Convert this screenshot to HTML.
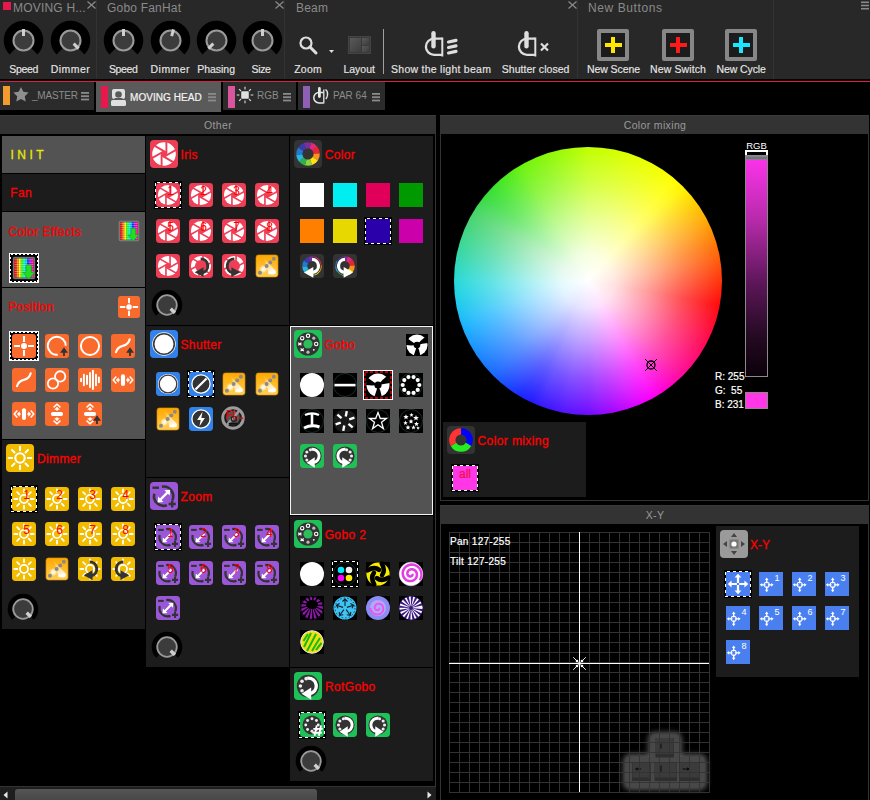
<!DOCTYPE html><html><head><meta charset="utf-8"><style>
*{margin:0;padding:0;box-sizing:border-box}
html,body{width:870px;height:800px;overflow:hidden;background:#000;font-family:"Liberation Sans", sans-serif}
div{position:absolute}
.t{white-space:nowrap;line-height:1}
svg{position:absolute;display:block;overflow:visible}
</style></head><body>
<svg width="0" height="0" style="position:absolute"><defs><symbol id="iris" viewBox="0 0 28 28"><rect width="28" height="28" rx="4" fill="#ee3f57"/><circle cx="14" cy="14" r="11.8" fill="#fff"/><path d="M16.40 15.40L16.40 1.00" stroke="#ee3f57" stroke-width="1.9"/><path d="M13.99 16.78L26.46 9.58" stroke="#ee3f57" stroke-width="1.9"/><path d="M11.59 15.38L24.06 22.58" stroke="#ee3f57" stroke-width="1.9"/><path d="M11.60 12.60L11.60 27.00" stroke="#ee3f57" stroke-width="1.9"/><path d="M14.01 11.22L1.54 18.42" stroke="#ee3f57" stroke-width="1.9"/><path d="M16.41 12.62L3.94 5.42" stroke="#ee3f57" stroke-width="1.9"/><circle cx="14" cy="14" r="2.9" fill="#ee3f57"/></symbol><symbol id="irisL" viewBox="0 0 28 28"><rect width="28" height="28" rx="4" fill="#ee3f57"/><circle cx="14" cy="14" r="11.8" fill="#fff"/><path d="M16.40 15.40L16.40 1.00" stroke="#ee3f57" stroke-width="1.9"/><path d="M13.99 16.78L26.46 9.58" stroke="#ee3f57" stroke-width="1.9"/><path d="M11.59 15.38L24.06 22.58" stroke="#ee3f57" stroke-width="1.9"/><path d="M11.60 12.60L11.60 27.00" stroke="#ee3f57" stroke-width="1.9"/><path d="M14.01 11.22L1.54 18.42" stroke="#ee3f57" stroke-width="1.9"/><path d="M16.41 12.62L3.94 5.42" stroke="#ee3f57" stroke-width="1.9"/><circle cx="14" cy="14" r="2.9" fill="#ee3f57"/><circle cx="14" cy="14" r="7" fill="#ee3f57"/><path d="M13.6 5.7A8.3 8.3 0 0 1 15.4 22.1" fill="none" stroke="#333" stroke-width="3.4"/><path d="M17 15.6L6.6 21.4L17 26.8Z" fill="#333"/></symbol><symbol id="irisR" viewBox="0 0 28 28"><rect width="28" height="28" rx="4" fill="#ee3f57"/><circle cx="14" cy="14" r="11.8" fill="#fff"/><path d="M16.40 15.40L16.40 1.00" stroke="#ee3f57" stroke-width="1.9"/><path d="M13.99 16.78L26.46 9.58" stroke="#ee3f57" stroke-width="1.9"/><path d="M11.59 15.38L24.06 22.58" stroke="#ee3f57" stroke-width="1.9"/><path d="M11.60 12.60L11.60 27.00" stroke="#ee3f57" stroke-width="1.9"/><path d="M14.01 11.22L1.54 18.42" stroke="#ee3f57" stroke-width="1.9"/><path d="M16.41 12.62L3.94 5.42" stroke="#ee3f57" stroke-width="1.9"/><circle cx="14" cy="14" r="2.9" fill="#ee3f57"/><circle cx="14" cy="14" r="7" fill="#ee3f57"/><path d="M14.4 5.7A8.3 8.3 0 0 0 12.6 22.1" fill="none" stroke="#333" stroke-width="3.4"/><path d="M11 15.6L21.4 21.4L11 26.8Z" fill="#333"/></symbol><symbol id="sun" viewBox="0 0 28 28"><rect width="28" height="28" rx="4" fill="#f2bc00"/><circle cx="14" cy="14" r="4.7" fill="none" stroke="#fff" stroke-width="2.1"/><path d="M21.80 14.00L25.30 14.00" stroke="#fff" stroke-width="2.1" stroke-linecap="round"/><path d="M19.52 19.52L21.99 21.99" stroke="#fff" stroke-width="2.1" stroke-linecap="round"/><path d="M14.00 21.80L14.00 25.30" stroke="#fff" stroke-width="2.1" stroke-linecap="round"/><path d="M8.48 19.52L6.01 21.99" stroke="#fff" stroke-width="2.1" stroke-linecap="round"/><path d="M6.20 14.00L2.70 14.00" stroke="#fff" stroke-width="2.1" stroke-linecap="round"/><path d="M8.48 8.48L6.01 6.01" stroke="#fff" stroke-width="2.1" stroke-linecap="round"/><path d="M14.00 6.20L14.00 2.70" stroke="#fff" stroke-width="2.1" stroke-linecap="round"/><path d="M19.52 8.48L21.99 6.01" stroke="#fff" stroke-width="2.1" stroke-linecap="round"/></symbol><symbol id="sunL" viewBox="0 0 28 28"><rect width="28" height="28" rx="4" fill="#f2bc00"/><circle cx="14" cy="14" r="4.7" fill="none" stroke="#fff" stroke-width="2.1"/><path d="M21.80 14.00L25.30 14.00" stroke="#fff" stroke-width="2.1" stroke-linecap="round"/><path d="M19.52 19.52L21.99 21.99" stroke="#fff" stroke-width="2.1" stroke-linecap="round"/><path d="M14.00 21.80L14.00 25.30" stroke="#fff" stroke-width="2.1" stroke-linecap="round"/><path d="M8.48 19.52L6.01 21.99" stroke="#fff" stroke-width="2.1" stroke-linecap="round"/><path d="M6.20 14.00L2.70 14.00" stroke="#fff" stroke-width="2.1" stroke-linecap="round"/><path d="M8.48 8.48L6.01 6.01" stroke="#fff" stroke-width="2.1" stroke-linecap="round"/><path d="M14.00 6.20L14.00 2.70" stroke="#fff" stroke-width="2.1" stroke-linecap="round"/><path d="M19.52 8.48L21.99 6.01" stroke="#fff" stroke-width="2.1" stroke-linecap="round"/><path d="M13.6 5.7A8.3 8.3 0 0 1 15.4 22.1" fill="none" stroke="#333" stroke-width="3.4"/><path d="M17 15.6L6.6 21.4L17 26.8Z" fill="#333"/></symbol><symbol id="sunR" viewBox="0 0 28 28"><rect width="28" height="28" rx="4" fill="#f2bc00"/><circle cx="14" cy="14" r="4.7" fill="none" stroke="#fff" stroke-width="2.1"/><path d="M21.80 14.00L25.30 14.00" stroke="#fff" stroke-width="2.1" stroke-linecap="round"/><path d="M19.52 19.52L21.99 21.99" stroke="#fff" stroke-width="2.1" stroke-linecap="round"/><path d="M14.00 21.80L14.00 25.30" stroke="#fff" stroke-width="2.1" stroke-linecap="round"/><path d="M8.48 19.52L6.01 21.99" stroke="#fff" stroke-width="2.1" stroke-linecap="round"/><path d="M6.20 14.00L2.70 14.00" stroke="#fff" stroke-width="2.1" stroke-linecap="round"/><path d="M8.48 8.48L6.01 6.01" stroke="#fff" stroke-width="2.1" stroke-linecap="round"/><path d="M14.00 6.20L14.00 2.70" stroke="#fff" stroke-width="2.1" stroke-linecap="round"/><path d="M19.52 8.48L21.99 6.01" stroke="#fff" stroke-width="2.1" stroke-linecap="round"/><path d="M14.4 5.7A8.3 8.3 0 0 0 12.6 22.1" fill="none" stroke="#333" stroke-width="3.4"/><path d="M11 15.6L21.4 21.4L11 26.8Z" fill="#333"/></symbol><symbol id="fx" viewBox="0 0 28 28"><defs><linearGradient id="gfx" x1="0" y1="0" x2="0" y2="1"><stop offset="0" stop-color="#ffa800"/><stop offset="1" stop-color="#ffcf55"/></linearGradient>
<linearGradient id="gbeam" x1="0" y1="0" x2="0.6" y2="1"><stop offset="0" stop-color="#fff" stop-opacity="0.1"/><stop offset="1" stop-color="#fff" stop-opacity="0.95"/></linearGradient>
<radialGradient id="gglow"><stop offset="0" stop-color="#fff"/><stop offset="0.5" stop-color="#fff" stop-opacity="0.7"/><stop offset="1" stop-color="#fff8a0" stop-opacity="0"/></radialGradient></defs>
<rect x="1.2" y="1.2" width="25.6" height="25.6" rx="2.8" fill="url(#gfx)" stroke="#e89400" stroke-width="0.8"/>
<path d="M10.5 5L25 20.5L16 24Z" fill="url(#gbeam)"/>
<ellipse cx="20" cy="22" rx="4.5" ry="1.8" fill="#fff"/>
<circle cx="9.8" cy="17.6" r="5" fill="url(#gglow)"/>
<g fill="#8a8a8a"><circle cx="5.8" cy="21.8" r="2.3"/><circle cx="13.6" cy="14" r="2.3"/><circle cx="17.8" cy="9.8" r="2.3"/><circle cx="22" cy="5.6" r="2.3"/></g></symbol><symbol id="shOpen" viewBox="0 0 28 28"><rect width="28" height="28" rx="4" fill="#3282ea"/><circle cx="14" cy="14" r="11.8" fill="#fff"/><circle cx="14" cy="14" r="10.3" fill="none" stroke="#3a3a3a" stroke-width="1.6"/></symbol><symbol id="shClosed" viewBox="0 0 28 28"><rect width="28" height="28" rx="4" fill="#3282ea"/><circle cx="14" cy="14" r="10.6" fill="#333" stroke="#fff" stroke-width="1.5"/><path d="M7.5 20.5L20.5 7.5" stroke="#fff" stroke-width="2.6"/></symbol><symbol id="shStrobe" viewBox="0 0 28 28"><rect width="28" height="28" rx="4" fill="#3282ea"/><circle cx="14" cy="14" r="10.6" fill="#333" stroke="#fff" stroke-width="1.5"/><path d="M15.8 5.5L9.5 15.2H13.6L12.2 22.5L18.5 12.8H14.4Z" fill="#fff"/></symbol><symbol id="flash" viewBox="0 0 28 28"><circle cx="14" cy="14" r="12" fill="#1c1c1c" stroke="#9c9c9c" stroke-width="3.4"/><circle cx="14" cy="13.5" r="8" fill="#555"/><path d="M7 22L21 6" stroke="#9c9c9c" stroke-width="3"/><path d="M9 20.5H19" stroke="#111" stroke-width="2"/><circle cx="15" cy="15" r="3" fill="none" stroke="#222" stroke-width="1.4"/></symbol><symbol id="zoom" viewBox="0 0 28 28"><rect width="28" height="28" rx="4" fill="#9a58d8"/><path d="M11.93 4.75A9.6 9.6 0 0 1 22.3 18.26M16.88 23.22A9.6 9.6 0 0 1 4.33 11.72" fill="none" stroke="#333" stroke-width="2.6"/><path d="M2.4 5.7H9" stroke="#333" stroke-width="2.4"/><path d="M22.2 18.4V25.6M18.6 22H25.8" stroke="#333" stroke-width="2.4"/><path d="M9.5 18.5L18.3 9.7" stroke="#fff" stroke-width="2.4"/><path d="M7.6 20.4L8.1 14.6L13.4 19.9Z M20.2 7.8L14.4 8.3L19.7 13.6Z" fill="#fff"/></symbol><symbol id="zoomN" viewBox="0 0 28 28"><rect width="28" height="28" rx="4" fill="#9a58d8"/><path d="M11.93 4.75A9.6 9.6 0 0 1 22.3 18.26M16.88 23.22A9.6 9.6 0 0 1 4.33 11.72" fill="none" stroke="#333" stroke-width="2.6"/><path d="M2.4 5.7H9" stroke="#333" stroke-width="2.4"/><path d="M22.2 18.4V25.6M18.6 22H25.8" stroke="#333" stroke-width="2.4"/><path d="M9.5 18.5L18 10" stroke="#fff" stroke-width="2.4"/><path d="M7.6 20.4L8.1 14.6L13.4 19.9Z" fill="#fff"/></symbol><symbol id="gobo" viewBox="0 0 28 28"><rect width="28" height="28" rx="4" fill="#1ec057"/><circle cx="14" cy="14" r="11.6" fill="#333"/><circle cx="14" cy="14" r="4.6" fill="#2dbd5a"/><circle cx="14.00" cy="5.80" r="1.7" fill="none" stroke="#fff" stroke-width="1.1"/><circle cx="19.80" cy="8.20" r="1.6" fill="#bbb"/><circle cx="22.20" cy="14.00" r="1.7" fill="none" stroke="#fff" stroke-width="1.1"/><circle cx="19.80" cy="19.80" r="0.9" fill="#fff"/><circle cx="14.00" cy="22.20" r="1.6" fill="#bbb"/><path d="M6.60 18.60L9.80 21.00M6.60 21.00L9.80 18.60" stroke="#fff" stroke-width="1.2"/><path d="M4.20 12.80L7.40 15.20M4.20 15.20L7.40 12.80" stroke="#fff" stroke-width="1.2"/><circle cx="8.20" cy="8.20" r="1.7" fill="none" stroke="#fff" stroke-width="1.1"/></symbol><symbol id="rgHash" viewBox="0 0 28 28"><rect width="28" height="28" rx="4" fill="#1ec057"/><circle cx="14" cy="14" r="11" fill="#333"/><circle cx="14" cy="14" r="3.5" fill="#333"/><circle cx="14.00" cy="6.70" r="1.7" fill="#eee"/><circle cx="19.16" cy="8.84" r="1.7" fill="#eee"/><circle cx="21.30" cy="14.00" r="1.7" fill="#eee"/><circle cx="19.16" cy="19.16" r="1.7" fill="#eee"/><circle cx="14.00" cy="21.30" r="1.7" fill="#eee"/><circle cx="8.84" cy="19.16" r="1.7" fill="#eee"/><circle cx="6.70" cy="14.00" r="1.7" fill="#eee"/><circle cx="8.84" cy="8.84" r="1.7" fill="#eee"/><path d="M14 17H28V28H14Z" fill="#1ec057" opacity="0"/><g stroke="#fff" stroke-width="2.2" fill="none"><path d="M19.5 14.5L17 26.5M24.5 14.5L22 26.5M15.5 18.5H26.5M14.5 23H25.5"/></g></symbol><symbol id="rgL" viewBox="0 0 28 28"><rect width="28" height="28" rx="4" fill="#1ec057"/><circle cx="14" cy="14" r="11.2" fill="#333"/><circle cx="12.16" cy="21.37" r="1.8" fill="#eee"/><circle cx="8.01" cy="18.68" r="1.8" fill="#eee"/><circle cx="6.40" cy="14.00" r="1.8" fill="#eee"/><circle cx="8.01" cy="9.32" r="1.8" fill="#eee"/><circle cx="12.16" cy="6.63" r="1.8" fill="#eee"/><path d="M13.5 6.2A7.8 7.8 0 0 1 15.5 21.7" fill="none" stroke="#fff" stroke-width="3.4"/><path d="M17.2 15.6L7.6 21.8L17.2 27.8Z" fill="#fff"/></symbol><symbol id="rgR" viewBox="0 0 28 28"><rect width="28" height="28" rx="4" fill="#1ec057"/><circle cx="14" cy="14" r="11.2" fill="#333"/><circle cx="15.84" cy="6.63" r="1.8" fill="#eee"/><circle cx="19.99" cy="9.32" r="1.8" fill="#eee"/><circle cx="21.60" cy="14.00" r="1.8" fill="#eee"/><circle cx="19.99" cy="18.68" r="1.8" fill="#eee"/><circle cx="15.84" cy="21.37" r="1.8" fill="#eee"/><path d="M14.5 6.2A7.8 7.8 0 0 0 12.5 21.7" fill="none" stroke="#fff" stroke-width="3.4"/><path d="M10.8 15.6L20.4 21.8L10.8 27.8Z" fill="#fff"/></symbol><symbol id="p1" viewBox="0 0 28 28"><rect width="28" height="28" rx="3.5" fill="#f96a2d"/><circle cx="14" cy="14" r="3.5" fill="#fff"/><path d="M14 2.4V9.3M14 18.7V25.6M2.4 14H9.3M18.7 14H25.6" stroke="#fff" stroke-width="2.45"/></symbol><symbol id="p2" viewBox="0 0 28 28"><rect width="28" height="28" rx="3.5" fill="#f96a2d"/><path d="M24.2 13.7A10.5 10.5 0 1 0 14.8 24.2" fill="none" stroke="#fff" stroke-width="2.3"/><path d="M17.6 21.8L22.2 15.5L26.8 21.8H23.2V25.6H21.1V21.8Z" fill="#333"/></symbol><symbol id="p3" viewBox="0 0 28 28"><rect width="28" height="28" rx="3.5" fill="#f96a2d"/><circle cx="14" cy="14" r="10.6" fill="none" stroke="#fff" stroke-width="2.3"/></symbol><symbol id="p4" viewBox="0 0 28 28"><rect width="28" height="28" rx="3.5" fill="#f96a2d"/><path d="M5.8 21.3C7.2 15.8 10.8 14.4 13.8 13.8S20.6 11.5 21.8 6.2" fill="none" stroke="#fff" stroke-width="2.5" stroke-linecap="round"/><path d="M17.6 21.8L22.2 15.5L26.8 21.8H23.2V25.6H21.1V21.8Z" fill="#333"/></symbol><symbol id="p5" viewBox="0 0 28 28"><rect width="28" height="28" rx="3.5" fill="#f96a2d"/><path d="M5.8 21.3C7.2 15.8 10.8 14.4 13.8 13.8S20.6 11.5 21.8 6.2" fill="none" stroke="#fff" stroke-width="2.5" stroke-linecap="round"/></symbol><symbol id="p6" viewBox="0 0 28 28"><rect width="28" height="28" rx="3.5" fill="#f96a2d"/><circle cx="9.3" cy="18" r="6" fill="none" stroke="#fff" stroke-width="2.1"/><circle cx="17.7" cy="9.8" r="6" fill="none" stroke="#fff" stroke-width="2.1"/></symbol><symbol id="p7" viewBox="0 0 28 28"><rect width="28" height="28" rx="3.5" fill="#f96a2d"/><path d="M3.6 12.6V15.6" stroke="#fff" stroke-width="2.3" stroke-linecap="round"/><path d="M6.9 7.8V20" stroke="#fff" stroke-width="2.3" stroke-linecap="round"/><path d="M10.5 9.1V18.7" stroke="#fff" stroke-width="2.3" stroke-linecap="round"/><path d="M14 5.7V22.1" stroke="#fff" stroke-width="2.3" stroke-linecap="round"/><path d="M17.4 3.2V24.6" stroke="#fff" stroke-width="2.3" stroke-linecap="round"/><path d="M21 7.8V20" stroke="#fff" stroke-width="2.3" stroke-linecap="round"/><path d="M24.4 11.2V16.7" stroke="#fff" stroke-width="2.3" stroke-linecap="round"/></symbol><symbol id="p8" viewBox="0 0 28 28"><rect width="28" height="28" rx="3.5" fill="#f96a2d"/><rect x="11.6" y="7.2" width="4.8" height="13.8" rx="2.4" fill="#fff"/><path d="M6.2 10L2.6 14L6.2 18M21.8 10L25.4 14L21.8 18" fill="none" stroke="#fff" stroke-width="1.7"/><path d="M5.6 14L9 10.8V17.2Z M22.4 14L19 10.8V17.2Z" fill="#fff"/><path d="M8 14H10.2M17.8 14H20" stroke="#fff" stroke-width="1.6"/></symbol><symbol id="p9" viewBox="0 0 28 28"><rect width="28" height="28" rx="3.5" fill="#f96a2d"/><rect x="6.9" y="11.8" width="14.2" height="4.4" rx="2.2" fill="#fff"/><path d="M10 6.3L14 2.7L18 6.3M10 21.7L14 25.3L18 21.7" fill="none" stroke="#fff" stroke-width="1.7"/><path d="M14 5.6L17.2 9H10.8Z M14 22.4L17.2 19H10.8Z" fill="#fff"/><path d="M14 8V10.2M14 17.8V20" stroke="#fff" stroke-width="1.6"/></symbol><symbol id="p10" viewBox="0 0 28 28"><rect width="28" height="28" rx="3.5" fill="#f96a2d"/><rect x="6.9" y="11.8" width="14.2" height="4.4" rx="2.2" fill="#fff"/><path d="M10 6.3L14 2.7L18 6.3M10 21.7L14 25.3L18 21.7" fill="none" stroke="#fff" stroke-width="1.7"/><path d="M14 5.6L17.2 9H10.8Z M14 22.4L17.2 19H10.8Z" fill="#fff"/><path d="M14 8V10.2M14 17.8V20" stroke="#fff" stroke-width="1.6"/><path d="M17.6 21.8L22.2 15.5L26.8 21.8H23.2V25.6H21.1V21.8Z" fill="#333"/></symbol><symbol id="cfx" viewBox="0 0 28 28"><rect x="1.5" y="1.5" width="25" height="25" rx="1.5" fill="#666" stroke="#999" stroke-width="0.8"/><rect x="3.00" y="3" width="2.5" height="22" fill="#ff0000"/><rect x="5.45" y="3" width="2.5" height="22" fill="#ff7700"/><rect x="7.90" y="3" width="2.5" height="22" fill="#ffee00"/><rect x="10.35" y="3" width="2.5" height="22" fill="#33ff00"/><rect x="12.80" y="3" width="2.5" height="22" fill="#00ffaa"/><rect x="15.25" y="3" width="2.5" height="22" fill="#00ccff"/><rect x="17.70" y="3" width="2.5" height="22" fill="#0033ff"/><rect x="20.15" y="3" width="2.5" height="22" fill="#cc00ff"/><rect x="22.60" y="3" width="2.5" height="22" fill="#ff0099"/><rect x="2.70" y="3" width="0.6" height="22" fill="#000" opacity="0.25"/><rect x="5.15" y="3" width="0.6" height="22" fill="#000" opacity="0.25"/><rect x="7.60" y="3" width="0.6" height="22" fill="#000" opacity="0.25"/><rect x="10.05" y="3" width="0.6" height="22" fill="#000" opacity="0.25"/><rect x="12.50" y="3" width="0.6" height="22" fill="#000" opacity="0.25"/><rect x="14.95" y="3" width="0.6" height="22" fill="#000" opacity="0.25"/><rect x="17.40" y="3" width="0.6" height="22" fill="#000" opacity="0.25"/><rect x="19.85" y="3" width="0.6" height="22" fill="#000" opacity="0.25"/><rect x="22.30" y="3" width="0.6" height="22" fill="#000" opacity="0.25"/><rect x="24.75" y="3" width="0.6" height="22" fill="#000" opacity="0.25"/><rect x="3" y="4.00" width="22" height="0.9" fill="#fff" opacity="0.45"/><rect x="3" y="6.70" width="22" height="0.9" fill="#fff" opacity="0.45"/><rect x="3" y="9.40" width="22" height="0.9" fill="#fff" opacity="0.45"/><rect x="3" y="12.10" width="22" height="0.9" fill="#fff" opacity="0.45"/><rect x="3" y="14.80" width="22" height="0.9" fill="#fff" opacity="0.45"/><rect x="3" y="17.50" width="22" height="0.9" fill="#fff" opacity="0.45"/><rect x="3" y="20.20" width="22" height="0.9" fill="#fff" opacity="0.45"/><rect x="3" y="22.90" width="22" height="0.9" fill="#fff" opacity="0.45"/><path d="M16.5 10.5H22.5V19H26.5L19.5 27L12.5 19H16.5Z" fill="#22dd22" stroke="#119911" stroke-width="0.6"/></symbol><symbol id="xyMain" viewBox="0 0 28 28"><rect width="28" height="28" fill="#4a7ff0"/><g fill="#fff"><path d="M14 2L18 6.5H15.3V12.7H12.7V6.5H10Z"/><path d="M14 26L10 21.5H12.7V15.3H15.3V21.5H18Z"/><path d="M2 14L6.5 10V12.7H12.7V15.3H6.5V18Z"/><path d="M26 14L21.5 18V15.3H15.3V12.7H21.5V10Z"/></g></symbol><symbol id="xyN" viewBox="0 0 28 28"><rect width="28" height="28" fill="#4a7ff0"/><g transform="translate(0.5 -3)"><g fill="#fff"><path d="M8.5 9.5L10.6 12.2H9.3V16.1H7.7V12.2H6.4Z"/><path d="M8.5 26.5L6.4 23.8H7.7V19.9H9.3V23.8H10.6Z"/><path d="M0.5 18L3.2 15.9V17.2H7.1V18.8H3.2V20.1Z"/><path d="M16.5 18L13.8 20.1V18.8H9.9V17.2H13.8V15.9Z"/></g><circle cx="8.5" cy="18" r="3" fill="none" stroke="#fff" stroke-width="1.2"/></g></symbol><symbol id="cmix" viewBox="0 0 28 28"><rect width="28" height="28" rx="4" fill="#333"/><path d="M14.00 2.20A11.8 11.8 0 0 1 24.22 19.90L18.85 16.80A5.6 5.6 0 0 0 14.00 8.40Z" fill="#0000ff"/><path d="M24.22 19.90A11.8 11.8 0 0 1 3.78 19.90L9.15 16.80A5.6 5.6 0 0 0 18.85 16.80Z" fill="#22ee22"/><path d="M3.78 19.90A11.8 11.8 0 0 1 14.00 2.20L14.00 8.40A5.6 5.6 0 0 0 9.15 16.80Z" fill="#ff3333"/></symbol><symbol id="cwheel" viewBox="0 0 28 28"><rect width="28" height="28" rx="4" fill="#333"/><path d="M17.05 2.60A11.8 11.8 0 0 1 23.23 6.65L18.38 10.51A5.6 5.6 0 0 0 15.45 8.59Z" fill="#dd2a7b"/><path d="M23.17 6.57A11.8 11.8 0 0 1 25.79 13.49L19.59 13.76A5.6 5.6 0 0 0 18.35 10.48Z" fill="#ee2233"/><path d="M25.78 13.38A11.8 11.8 0 0 1 23.84 20.51L18.67 17.09A5.6 5.6 0 0 0 19.59 13.71Z" fill="#f7931e"/><path d="M23.90 20.43A11.8 11.8 0 0 1 18.13 25.05L15.96 19.25A5.6 5.6 0 0 0 18.70 17.05Z" fill="#fde21a"/><path d="M18.23 25.02A11.8 11.8 0 0 1 10.85 25.37L12.50 19.40A5.6 5.6 0 0 0 16.01 19.23Z" fill="#8fd43c"/><path d="M10.95 25.40A11.8 11.8 0 0 1 4.77 21.35L9.62 17.49A5.6 5.6 0 0 0 12.55 19.41Z" fill="#30b04a"/><path d="M4.83 21.43A11.8 11.8 0 0 1 2.21 14.51L8.41 14.24A5.6 5.6 0 0 0 9.65 17.52Z" fill="#2bb3e6"/><path d="M2.22 14.62A11.8 11.8 0 0 1 4.16 7.49L9.33 10.91A5.6 5.6 0 0 0 8.41 14.29Z" fill="#1f7ccf"/><path d="M4.10 7.57A11.8 11.8 0 0 1 9.87 2.95L12.04 8.75A5.6 5.6 0 0 0 9.30 10.95Z" fill="#3a3aa8"/><path d="M9.77 2.98A11.8 11.8 0 0 1 17.15 2.63L15.50 8.60A5.6 5.6 0 0 0 11.99 8.77Z" fill="#7a2f9a"/></symbol><symbol id="crotL" viewBox="0 0 28 28"><rect width="28" height="28" rx="4" fill="#333"/><path d="M16.95 2.99A11.4 11.4 0 0 1 22.92 6.90L18.07 10.76A5.2 5.2 0 0 0 15.35 8.98Z" fill="#dd2a7b"/><path d="M22.86 6.83A11.4 11.4 0 0 1 25.39 13.50L19.20 13.77A5.2 5.2 0 0 0 18.04 10.73Z" fill="#ee2233"/><path d="M25.38 13.40A11.4 11.4 0 0 1 23.51 20.29L18.34 16.87A5.2 5.2 0 0 0 19.19 13.73Z" fill="#f7931e"/><path d="M23.56 20.21A11.4 11.4 0 0 1 17.99 24.68L15.82 18.87A5.2 5.2 0 0 0 18.36 16.83Z" fill="#fde21a"/><path d="M18.09 24.64A11.4 11.4 0 0 1 10.95 24.99L12.61 19.01A5.2 5.2 0 0 0 15.86 18.85Z" fill="#8fd43c"/><path d="M11.05 25.01A11.4 11.4 0 0 1 5.08 21.10L9.93 17.24A5.2 5.2 0 0 0 12.65 19.02Z" fill="#30b04a"/><path d="M5.14 21.17A11.4 11.4 0 0 1 2.61 14.50L8.80 14.23A5.2 5.2 0 0 0 9.96 17.27Z" fill="#2bb3e6"/><path d="M2.62 14.60A11.4 11.4 0 0 1 4.49 7.71L9.66 11.13A5.2 5.2 0 0 0 8.81 14.27Z" fill="#1f7ccf"/><path d="M4.44 7.79A11.4 11.4 0 0 1 10.01 3.32L12.18 9.13A5.2 5.2 0 0 0 9.64 11.17Z" fill="#3a3aa8"/><path d="M9.91 3.36A11.4 11.4 0 0 1 17.05 3.01L15.39 8.99A5.2 5.2 0 0 0 12.14 9.15Z" fill="#7a2f9a"/><circle cx="14" cy="14" r="5.3" fill="#333"/><path d="M14 6.4A7.6 7.6 0 0 1 15.2 21.5" fill="none" stroke="#333" stroke-width="5.6"/><path d="M14 6.4A7.6 7.6 0 0 1 15.2 21.5" fill="none" stroke="#fff" stroke-width="3.8"/><path d="M15.5 15.2L4.6 21.6L15.5 27.6Z" fill="#fff"/></symbol><symbol id="crotR" viewBox="0 0 28 28"><rect width="28" height="28" rx="4" fill="#333"/><path d="M16.95 2.99A11.4 11.4 0 0 1 22.92 6.90L18.07 10.76A5.2 5.2 0 0 0 15.35 8.98Z" fill="#dd2a7b"/><path d="M22.86 6.83A11.4 11.4 0 0 1 25.39 13.50L19.20 13.77A5.2 5.2 0 0 0 18.04 10.73Z" fill="#ee2233"/><path d="M25.38 13.40A11.4 11.4 0 0 1 23.51 20.29L18.34 16.87A5.2 5.2 0 0 0 19.19 13.73Z" fill="#f7931e"/><path d="M23.56 20.21A11.4 11.4 0 0 1 17.99 24.68L15.82 18.87A5.2 5.2 0 0 0 18.36 16.83Z" fill="#fde21a"/><path d="M18.09 24.64A11.4 11.4 0 0 1 10.95 24.99L12.61 19.01A5.2 5.2 0 0 0 15.86 18.85Z" fill="#8fd43c"/><path d="M11.05 25.01A11.4 11.4 0 0 1 5.08 21.10L9.93 17.24A5.2 5.2 0 0 0 12.65 19.02Z" fill="#30b04a"/><path d="M5.14 21.17A11.4 11.4 0 0 1 2.61 14.50L8.80 14.23A5.2 5.2 0 0 0 9.96 17.27Z" fill="#2bb3e6"/><path d="M2.62 14.60A11.4 11.4 0 0 1 4.49 7.71L9.66 11.13A5.2 5.2 0 0 0 8.81 14.27Z" fill="#1f7ccf"/><path d="M4.44 7.79A11.4 11.4 0 0 1 10.01 3.32L12.18 9.13A5.2 5.2 0 0 0 9.64 11.17Z" fill="#3a3aa8"/><path d="M9.91 3.36A11.4 11.4 0 0 1 17.05 3.01L15.39 8.99A5.2 5.2 0 0 0 12.14 9.15Z" fill="#7a2f9a"/><circle cx="14" cy="14" r="5.3" fill="#333"/><path d="M14 6.4A7.6 7.6 0 0 0 12.8 21.5" fill="none" stroke="#333" stroke-width="5.6"/><path d="M14 6.4A7.6 7.6 0 0 0 12.8 21.5" fill="none" stroke="#fff" stroke-width="3.8"/><path d="M12.5 15.2L23.4 21.6L12.5 27.6Z" fill="#fff"/></symbol></defs></svg>
<div style="left:0px;top:0px;width:870px;height:79px;background:#282828"></div>
<div style="left:96px;top:0px;width:1px;height:79px;background:#333"></div>
<div style="left:284px;top:0px;width:1px;height:79px;background:#333"></div>
<div style="left:577px;top:0px;width:1px;height:79px;background:#333"></div>
<div style="left:773px;top:0px;width:1px;height:79px;background:#333"></div>
<div style="left:0px;top:81px;width:870px;height:1px;background:#e8184d"></div>
<div style="left:3px;top:2px;width:8px;height:8px;background:#e8184d"></div>
<div class="t" style="left:13px;top:2px;font-size:12px;color:#8a8a8a;letter-spacing:0.2px">MOVING H...</div>
<div class="t" style="left:107px;top:2px;font-size:12px;color:#8a8a8a;letter-spacing:0.2px">Gobo FanHat</div>
<div class="t" style="left:296px;top:2px;font-size:12px;color:#8a8a8a;letter-spacing:0.2px">Beam</div>
<div class="t" style="left:588px;top:2px;font-size:12px;color:#8a8a8a;letter-spacing:0.2px;letter-spacing:0.6px">New Buttons</div>
<svg style="left:87px;top:1px" width="9" height="8"><path d="M0.5 0.5L8.5 7.5M8.5 0.5L0.5 7.5" stroke="#8a8a8a" stroke-width="1.2"/></svg>
<svg style="left:275px;top:1px" width="9" height="8"><path d="M0.5 0.5L8.5 7.5M8.5 0.5L0.5 7.5" stroke="#8a8a8a" stroke-width="1.2"/></svg>
<svg style="left:568px;top:1px" width="9" height="8"><path d="M0.5 0.5L8.5 7.5M8.5 0.5L0.5 7.5" stroke="#8a8a8a" stroke-width="1.2"/></svg>
<svg style="left:861px;top:1px" width="8" height="9"><rect x="0" y="0.5" width="8" height="1.6" fill="#8a8a8a"/><rect x="0" y="3.7" width="8" height="1.6" fill="#8a8a8a"/><rect x="0" y="6.9" width="8" height="1.6" fill="#8a8a8a"/></svg>
<svg style="left:4.0px;top:21.0px" width="39.0" height="39.0" viewBox="-19.5 -19.5 39.0 39.0"><path d="M-10.78 10.78A15.25 15.25 0 1 1 10.78 10.78" fill="none" stroke="#000" stroke-width="9.0"/><circle r="10" fill="#3c3c3c" stroke="#9a9a9a" stroke-width="2.0"/><rect x="-1.5" y="-11.5" width="3" height="7.0" fill="#cfcfcf" transform="rotate(0)"/></svg>
<svg style="left:51.0px;top:21.0px" width="39.0" height="39.0" viewBox="-19.5 -19.5 39.0 39.0"><path d="M-10.78 10.78A15.25 15.25 0 1 1 10.78 10.78" fill="none" stroke="#000" stroke-width="9.0"/><circle r="10" fill="#3c3c3c" stroke="#9a9a9a" stroke-width="2.0"/><rect x="-1.5" y="-11.5" width="3" height="7.0" fill="#cfcfcf" transform="rotate(135)"/></svg>
<svg style="left:104.0px;top:21.0px" width="39.0" height="39.0" viewBox="-19.5 -19.5 39.0 39.0"><path d="M-10.78 10.78A15.25 15.25 0 1 1 10.78 10.78" fill="none" stroke="#000" stroke-width="9.0"/><circle r="10" fill="#3c3c3c" stroke="#9a9a9a" stroke-width="2.0"/><rect x="-1.5" y="-11.5" width="3" height="7.0" fill="#cfcfcf" transform="rotate(0)"/></svg>
<svg style="left:150.5px;top:21.0px" width="39.0" height="39.0" viewBox="-19.5 -19.5 39.0 39.0"><path d="M-10.78 10.78A15.25 15.25 0 1 1 10.78 10.78" fill="none" stroke="#000" stroke-width="9.0"/><circle r="10" fill="#3c3c3c" stroke="#9a9a9a" stroke-width="2.0"/><rect x="-1.5" y="-11.5" width="3" height="7.0" fill="#cfcfcf" transform="rotate(15)"/></svg>
<svg style="left:196.5px;top:21.0px" width="39.0" height="39.0" viewBox="-19.5 -19.5 39.0 39.0"><path d="M-10.78 10.78A15.25 15.25 0 1 1 10.78 10.78" fill="none" stroke="#000" stroke-width="9.0"/><circle r="10" fill="#3c3c3c" stroke="#9a9a9a" stroke-width="2.0"/><rect x="-1.5" y="-11.5" width="3" height="7.0" fill="#cfcfcf" transform="rotate(-135)"/></svg>
<svg style="left:242.5px;top:21.0px" width="39.0" height="39.0" viewBox="-19.5 -19.5 39.0 39.0"><path d="M-10.78 10.78A15.25 15.25 0 1 1 10.78 10.78" fill="none" stroke="#000" stroke-width="9.0"/><circle r="10" fill="#3c3c3c" stroke="#9a9a9a" stroke-width="2.0"/><rect x="-1.5" y="-11.5" width="3" height="7.0" fill="#cfcfcf" transform="rotate(0)"/></svg>
<div class="t" style="left:-56.385000000000005px;top:63.8px;font-size:10.5px;color:#e6e6e6;text-align:center;width:160px;-webkit-text-stroke:0.15px #e6e6e6;letter-spacing:-0.37px">Speed</div>
<div class="t" style="left:-9.470000000000002px;top:63.8px;font-size:10.5px;color:#e6e6e6;text-align:center;width:160px;-webkit-text-stroke:0.15px #e6e6e6;letter-spacing:0.46px">Dimmer</div>
<div class="t" style="left:43.215px;top:63.8px;font-size:10.5px;color:#e6e6e6;text-align:center;width:160px;-webkit-text-stroke:0.15px #e6e6e6;letter-spacing:-0.37px">Speed</div>
<div class="t" style="left:90.33px;top:63.8px;font-size:10.5px;color:#e6e6e6;text-align:center;width:160px;-webkit-text-stroke:0.15px #e6e6e6;letter-spacing:0.46px">Dimmer</div>
<div class="t" style="left:136.09px;top:63.8px;font-size:10.5px;color:#e6e6e6;text-align:center;width:160px;-webkit-text-stroke:0.15px #e6e6e6;letter-spacing:-0.02px">Phasing</div>
<div class="t" style="left:181.01999999999998px;top:63.8px;font-size:10.5px;color:#e6e6e6;text-align:center;width:160px;-webkit-text-stroke:0.15px #e6e6e6;letter-spacing:-0.36px">Size</div>
<div class="t" style="left:228.145px;top:63.8px;font-size:10.5px;color:#e6e6e6;text-align:center;width:160px;-webkit-text-stroke:0.15px #e6e6e6;letter-spacing:0.29px">Zoom</div>
<div class="t" style="left:279.2px;top:63.8px;font-size:10.5px;color:#e6e6e6;text-align:center;width:160px;-webkit-text-stroke:0.15px #e6e6e6;letter-spacing:-0.0px">Layout</div>
<div class="t" style="left:361.13px;top:63.8px;font-size:10.5px;color:#e6e6e6;text-align:center;width:160px;-webkit-text-stroke:0.15px #e6e6e6;letter-spacing:0.26px">Show the light beam</div>
<div class="t" style="left:455.62px;top:63.8px;font-size:10.5px;color:#e6e6e6;text-align:center;width:160px;-webkit-text-stroke:0.15px #e6e6e6;letter-spacing:0.04px">Shutter closed</div>
<div class="t" style="left:533.46px;top:63.8px;font-size:10.5px;color:#e6e6e6;text-align:center;width:160px;-webkit-text-stroke:0.15px #e6e6e6;letter-spacing:-0.08px">New Scene</div>
<div class="t" style="left:598.06px;top:63.8px;font-size:10.5px;color:#e6e6e6;text-align:center;width:160px;-webkit-text-stroke:0.15px #e6e6e6;letter-spacing:0.12px">New Switch</div>
<div class="t" style="left:661.1550000000001px;top:63.8px;font-size:10.5px;color:#e6e6e6;text-align:center;width:160px;-webkit-text-stroke:0.15px #e6e6e6;letter-spacing:-0.09px">New Cycle</div>
<svg style="left:298px;top:35px" width="40" height="22"><circle cx="8" cy="8" r="5.5" fill="none" stroke="#dedede" stroke-width="2.2"/><path d="M12 12L18 18" stroke="#dedede" stroke-width="3" stroke-linecap="round"/><path d="M31 15h5l-2.5 3z" fill="#dedede"/></svg>
<div style="left:348px;top:36px;width:23px;height:18px;background:#3a3a3a;border:1px solid #444"></div>
<div style="left:350px;top:38px;width:11px;height:14px;background:linear-gradient(135deg,#5a5a5a,#3c3c3c)"></div>
<div style="left:362px;top:38px;width:7px;height:6.5px;background:linear-gradient(135deg,#5a5a5a,#3c3c3c)"></div>
<div style="left:362px;top:45.5px;width:7px;height:6.5px;background:linear-gradient(135deg,#5a5a5a,#3c3c3c)"></div>
<div style="left:383px;top:29px;width:1px;height:45px;background:#a0a0a0"></div>
<svg style="left:424px;top:31px" width="36" height="27" viewBox="0 0 36 27"><path d="M18 7.6H10A8.1 8.1 0 0 0 10 23.8H18" fill="none" stroke="#dedede" stroke-width="2.3"/><path d="M18.3 6.5V25.5" stroke="#dedede" stroke-width="2"/><rect x="7.3" y="0" width="4.4" height="17.5" rx="2.2" fill="#dedede"/><path d="M24.5 11l7.5 -1.6M24.5 16.5l7.5 -1.6M24.5 22l7.5 -1.6" stroke="#dedede" stroke-width="3.2" stroke-linecap="round"/></svg>
<svg style="left:517px;top:31px" width="36" height="27" viewBox="0 0 36 27"><path d="M18 7.6H10A8.1 8.1 0 0 0 10 23.8H18" fill="none" stroke="#dedede" stroke-width="2.3"/><path d="M18.3 6.5V25.5" stroke="#dedede" stroke-width="2"/><rect x="7.3" y="0" width="4.4" height="17.5" rx="2.2" fill="#dedede"/><path d="M24 12.5l7 7M31 12.5l-7 7" stroke="#dedede" stroke-width="2.2"/></svg>
<div style="left:597px;top:29px;width:32px;height:32px;background:#1c1c1c;border:4px solid #878787;border-radius:2px"></div>
<div style="left:605px;top:42.7px;width:16.5px;height:4.6px;background:#ffe600"></div>
<div style="left:610.7px;top:37px;width:4.5px;height:16.3px;background:#ffe600"></div>
<div style="left:662px;top:29px;width:32px;height:32px;background:#1c1c1c;border:4px solid #878787;border-radius:2px"></div>
<div style="left:670px;top:42.7px;width:16.5px;height:4.6px;background:#ff1a1a"></div>
<div style="left:675.7px;top:37px;width:4.5px;height:16.3px;background:#ff1a1a"></div>
<div style="left:725px;top:29px;width:32px;height:32px;background:#1c1c1c;border:4px solid #878787;border-radius:2px"></div>
<div style="left:733px;top:42.7px;width:16.5px;height:4.6px;background:#1ae6ff"></div>
<div style="left:738.7px;top:37px;width:4.5px;height:16.3px;background:#1ae6ff"></div>
<div style="left:0px;top:79px;width:870px;height:2px;background:#000"></div>
<div style="left:0px;top:82px;width:94px;height:28px;background:#2b2b2b"></div>
<div style="left:96px;top:82px;width:125px;height:30px;background:#5a5a5a"></div>
<div style="left:223px;top:82px;width:73px;height:28px;background:#2b2b2b"></div>
<div style="left:298px;top:82px;width:87px;height:28px;background:#2b2b2b"></div>
<div style="left:3px;top:86px;width:7px;height:19px;background:#f39a2e"></div>
<svg style="left:12px;top:86px" width="18" height="18" viewBox="-9 -9 18 18"><path d="M0 -8L2.35 -3.2L7.6 -2.5L3.8 1.2L4.7 6.5L0 4L-4.7 6.5L-3.8 1.2L-7.6 -2.5L-2.35 -3.2Z" fill="#8f8f8f"/></svg>
<div class="t" style="left:32px;top:91px;font-size:10px;color:#8c8c8c;letter-spacing:-0.2px">_MASTER</div>
<svg style="left:81px;top:92px" width="8" height="9"><rect x="0" y="0" width="8" height="1.8" fill="#8a8a8a"/><rect x="0" y="3.3" width="8" height="1.8" fill="#8a8a8a"/><rect x="0" y="6.6" width="8" height="1.8" fill="#8a8a8a"/></svg>
<div style="left:101px;top:86px;width:7px;height:22px;background:#e8184d"></div>
<svg style="left:111px;top:89px" width="15" height="17" viewBox="0 0 15 17"><rect x="1" y="0" width="13" height="10" rx="2" fill="#e0e0e0"/><circle cx="7.5" cy="5.5" r="3.3" fill="#5a5a5a"/><rect x="3.5" y="9" width="8" height="2.5" fill="#5a5a5a"/><rect x="0" y="11" width="15" height="6" rx="1.5" fill="#e0e0e0"/></svg>
<div class="t" style="left:130px;top:93px;font-size:10px;color:#f4f4f4;letter-spacing:0.05px;-webkit-text-stroke:0.2px #f4f4f4">MOVING HEAD</div>
<svg style="left:208px;top:93px" width="8" height="9"><rect x="0" y="0" width="8" height="1.8" fill="#8a8a8a"/><rect x="0" y="3.3" width="8" height="1.8" fill="#8a8a8a"/><rect x="0" y="6.6" width="8" height="1.8" fill="#8a8a8a"/></svg>
<div style="left:228px;top:86px;width:7px;height:22px;background:#d9569e"></div>
<svg style="left:236px;top:86px" width="18" height="18" viewBox="-9 -9 18 18"><rect x="-3.8" y="-3.8" width="7.6" height="7.6" rx="0.8" fill="#e0e0e0"/><g stroke="#e0e0e0" stroke-width="1.1"><path d="M0 -8.3V-5.6M0 5.6V8.3M-8.3 0H-5.6M5.6 0H8.3M-5.9 -5.9L-4 -4M5.9 -5.9L4 -4M-5.9 5.9L-4 4M5.9 5.9L4 4"/></g></svg>
<div class="t" style="left:257px;top:91px;font-size:10px;color:#8c8c8c">RGB</div>
<svg style="left:283px;top:93px" width="8" height="9"><rect x="0" y="0" width="8" height="1.8" fill="#8a8a8a"/><rect x="0" y="3.3" width="8" height="1.8" fill="#8a8a8a"/><rect x="0" y="6.6" width="8" height="1.8" fill="#8a8a8a"/></svg>
<div style="left:303px;top:86px;width:7px;height:22px;background:#8e5fb5"></div>
<svg style="left:313px;top:86px" width="16" height="18" viewBox="0 0 16 18"><path d="M10.5 6.5H6A5.2 5.2 0 0 0 6 16.9H10.5" fill="none" stroke="#e8e8e8" stroke-width="1.5"/><path d="M10.8 3.5V17.5" stroke="#e8e8e8" stroke-width="1.3"/><rect x="5" y="1" width="2.8" height="11" rx="1.4" fill="#e8e8e8"/><path d="M12.5 3.5Q15 5 14.5 9Q14 12 12.8 13" fill="none" stroke="#e8e8e8" stroke-width="1.4"/></svg>
<div class="t" style="left:333px;top:91px;font-size:10px;color:#8c8c8c">PAR 64</div>
<svg style="left:372px;top:93px" width="8" height="9"><rect x="0" y="0" width="8" height="1.8" fill="#8a8a8a"/><rect x="0" y="3.3" width="8" height="1.8" fill="#8a8a8a"/><rect x="0" y="6.6" width="8" height="1.8" fill="#8a8a8a"/></svg>
<div style="left:0px;top:115px;width:436px;height:19px;background:#333;border-top:1px solid #3a3a3a"></div>
<div class="t" style="left:0px;top:120px;font-size:10.5px;color:#9a9a9a;letter-spacing:0.35px;width:436px;text-align:center">Other</div>
<div style="left:435px;top:134px;width:1px;height:666px;background:#333"></div>
<div style="left:2px;top:136px;width:143px;height:37px;background:#535353"></div>
<div style="left:2px;top:174px;width:143px;height:37px;background:#1c1c1c"></div>
<div style="left:2px;top:212px;width:143px;height:75px;background:#535353"></div>
<div style="left:2px;top:288px;width:143px;height:151px;background:#535353"></div>
<div style="left:2px;top:440px;width:143px;height:189px;background:#1c1c1c"></div>
<div style="left:146px;top:136px;width:143px;height:189px;background:#1c1c1c"></div>
<div style="left:146px;top:326px;width:143px;height:151px;background:#1c1c1c"></div>
<div style="left:146px;top:478px;width:143px;height:189px;background:#1c1c1c"></div>
<div style="left:290px;top:136px;width:143px;height:189px;background:#1c1c1c"></div>
<div style="left:290px;top:326px;width:143px;height:189px;background:#535353;border:1px solid #f4f4f4"></div>
<div style="left:290px;top:516px;width:143px;height:151px;background:#1c1c1c"></div>
<div style="left:290px;top:668px;width:143px;height:113px;background:#1c1c1c"></div>
<div class="t" style="left:10.5px;top:149px;font-size:12px;color:#e8e800;letter-spacing:3.5px;-webkit-text-stroke:0.3px #e8e800">INIT</div>
<div class="t" style="left:10.3px;top:186.9px;font-size:12px;color:#ff0000;letter-spacing:0.35px;-webkit-text-stroke:0.3px #ff0000">Fan</div>
<div class="t" style="left:8.5px;top:225.6px;font-size:12px;color:#ff0000;letter-spacing:0.35px;-webkit-text-stroke:0.3px #ff0000">Color Effects</div>
<svg style="left:118px;top:220px" width="22" height="22"><use href="#cfx"/></svg>
<svg style="left:9px;top:253px" width="30" height="30" shape-rendering="crispEdges"><rect x="0.5" y="0.5" width="29" height="29" fill="#000" stroke="#fff" stroke-width="1"/><rect x="1.5" y="1.5" width="27" height="27" fill="none" stroke="#fff" stroke-width="1" stroke-dasharray="2 2"/></svg>
<svg style="left:12px;top:256px" width="24" height="24"><use href="#cfx"/></svg>
<div class="t" style="left:8.5px;top:300.6px;font-size:12px;color:#ff0000;letter-spacing:0.35px;-webkit-text-stroke:0.3px #ff0000">Position</div>
<svg style="left:118px;top:296px" width="22" height="22"><use href="#p1"/></svg>
<svg style="left:9px;top:331px" width="30" height="30" shape-rendering="crispEdges"><rect x="0.5" y="0.5" width="29" height="29" fill="#000" stroke="#fff" stroke-width="1"/><rect x="1.5" y="1.5" width="27" height="27" fill="none" stroke="#fff" stroke-width="1" stroke-dasharray="2 2"/></svg>
<svg style="left:12px;top:334px" width="24" height="24"><use href="#p1"/></svg>
<svg style="left:45px;top:334px" width="24" height="24"><use href="#p2"/></svg>
<svg style="left:78px;top:334px" width="24" height="24"><use href="#p3"/></svg>
<svg style="left:111px;top:334px" width="24" height="24"><use href="#p4"/></svg>
<svg style="left:12px;top:368px" width="24" height="24"><use href="#p5"/></svg>
<svg style="left:45px;top:368px" width="24" height="24"><use href="#p6"/></svg>
<svg style="left:78px;top:368px" width="24" height="24"><use href="#p7"/></svg>
<svg style="left:111px;top:368px" width="24" height="24"><use href="#p8"/></svg>
<svg style="left:12px;top:402px" width="24" height="24"><use href="#p8"/></svg>
<svg style="left:45px;top:402px" width="24" height="24"><use href="#p9"/></svg>
<svg style="left:78px;top:402px" width="24" height="24"><use href="#p10"/></svg>
<svg style="left:6px;top:444px" width="28" height="28"><use href="#sun"/></svg>
<div class="t" style="left:37px;top:452.6px;font-size:12px;color:#ff0000;letter-spacing:0.35px;-webkit-text-stroke:0.3px #ff0000">Dimmer</div>
<svg style="left:10px;top:485px" width="28" height="28" shape-rendering="crispEdges"><rect width="28" height="28" fill="#000"/><rect x="1.5" y="1.5" width="25" height="25" fill="none" stroke="#fff" stroke-width="1" stroke-dasharray="3 3" stroke-dashoffset="-1"/></svg>
<svg style="left:12px;top:487px" width="24" height="24"><use href="#sun"/></svg>
<div class="t" style="left:20.5px;top:488.5px;width:12px;text-align:center;font-size:12px;color:#ff0000">1</div>
<svg style="left:45px;top:487px" width="24" height="24"><use href="#sun"/></svg>
<div class="t" style="left:53.5px;top:488.5px;width:12px;text-align:center;font-size:12px;color:#ff0000">2</div>
<svg style="left:78px;top:487px" width="24" height="24"><use href="#sun"/></svg>
<div class="t" style="left:86.5px;top:488.5px;width:12px;text-align:center;font-size:12px;color:#ff0000">3</div>
<svg style="left:111px;top:487px" width="24" height="24"><use href="#sun"/></svg>
<div class="t" style="left:119.5px;top:488.5px;width:12px;text-align:center;font-size:12px;color:#ff0000">4</div>
<svg style="left:12px;top:522px" width="24" height="24"><use href="#sun"/></svg>
<div class="t" style="left:20.5px;top:523.5px;width:12px;text-align:center;font-size:12px;color:#ff0000">5</div>
<svg style="left:45px;top:522px" width="24" height="24"><use href="#sun"/></svg>
<div class="t" style="left:53.5px;top:523.5px;width:12px;text-align:center;font-size:12px;color:#ff0000">6</div>
<svg style="left:78px;top:522px" width="24" height="24"><use href="#sun"/></svg>
<div class="t" style="left:86.5px;top:523.5px;width:12px;text-align:center;font-size:12px;color:#ff0000">7</div>
<svg style="left:111px;top:522px" width="24" height="24"><use href="#sun"/></svg>
<div class="t" style="left:119.5px;top:523.5px;width:12px;text-align:center;font-size:12px;color:#ff0000">8</div>
<svg style="left:12px;top:557px" width="24" height="24"><use href="#sun"/></svg>
<svg style="left:45px;top:557px" width="24" height="24"><use href="#fx"/></svg>
<svg style="left:78px;top:557px" width="24" height="24"><use href="#sunL"/></svg>
<svg style="left:111px;top:557px" width="24" height="24"><use href="#sunR"/></svg>
<svg style="left:7.75px;top:593.5px" width="30" height="30" viewBox="-15 -15 30 30"><path d="M-8.34 8.34A11.8 11.8 0 1 1 8.34 8.34" fill="none" stroke="#000" stroke-width="7.0"/><circle r="10" fill="#000"/><circle r="9.8" fill="#3c3c3c" stroke="#9a9a9a" stroke-width="1.8"/><rect x="-1.7" y="-11.2" width="3.4" height="6" fill="#d0d0d0" transform="rotate(135)"/></svg>
<svg style="left:150px;top:140px" width="28" height="28"><use href="#iris"/></svg>
<div class="t" style="left:180.5px;top:148.6px;font-size:12px;color:#ff0000;letter-spacing:0.35px;-webkit-text-stroke:0.3px #ff0000">Iris</div>
<svg style="left:154px;top:181px" width="28" height="28" shape-rendering="crispEdges"><rect width="28" height="28" fill="#000"/><rect x="1.5" y="1.5" width="25" height="25" fill="none" stroke="#fff" stroke-width="1" stroke-dasharray="3 3" stroke-dashoffset="-1"/></svg>
<svg style="left:156px;top:183px" width="24" height="24"><use href="#iris"/></svg>
<div class="t" style="left:164.5px;top:184.5px;width:12px;text-align:center;font-size:12px;color:#ff0000">1</div>
<svg style="left:189px;top:183px" width="24" height="24"><use href="#iris"/></svg>
<div class="t" style="left:197.5px;top:184.5px;width:12px;text-align:center;font-size:12px;color:#ff0000">2</div>
<svg style="left:222px;top:183px" width="24" height="24"><use href="#iris"/></svg>
<div class="t" style="left:230.5px;top:184.5px;width:12px;text-align:center;font-size:12px;color:#ff0000">3</div>
<svg style="left:255px;top:183px" width="24" height="24"><use href="#iris"/></svg>
<div class="t" style="left:263.5px;top:184.5px;width:12px;text-align:center;font-size:12px;color:#ff0000">4</div>
<svg style="left:156px;top:219px" width="24" height="24"><use href="#iris"/></svg>
<div class="t" style="left:164.5px;top:220.5px;width:12px;text-align:center;font-size:12px;color:#ff0000">5</div>
<svg style="left:189px;top:219px" width="24" height="24"><use href="#iris"/></svg>
<div class="t" style="left:197.5px;top:220.5px;width:12px;text-align:center;font-size:12px;color:#ff0000">6</div>
<svg style="left:222px;top:219px" width="24" height="24"><use href="#iris"/></svg>
<div class="t" style="left:230.5px;top:220.5px;width:12px;text-align:center;font-size:12px;color:#ff0000">7</div>
<svg style="left:255px;top:219px" width="24" height="24"><use href="#iris"/></svg>
<div class="t" style="left:263.5px;top:220.5px;width:12px;text-align:center;font-size:12px;color:#ff0000">8</div>
<svg style="left:156px;top:254px" width="24" height="24"><use href="#iris"/></svg>
<svg style="left:189px;top:254px" width="24" height="24"><use href="#irisL"/></svg>
<svg style="left:222px;top:254px" width="24" height="24"><use href="#irisR"/></svg>
<svg style="left:255px;top:254px" width="24" height="24"><use href="#fx"/></svg>
<svg style="left:152.25px;top:290px" width="30" height="30" viewBox="-15 -15 30 30"><path d="M-8.34 8.34A11.8 11.8 0 1 1 8.34 8.34" fill="none" stroke="#000" stroke-width="7.0"/><circle r="10" fill="#000"/><circle r="9.8" fill="#3c3c3c" stroke="#9a9a9a" stroke-width="1.8"/><rect x="-1.7" y="-11.2" width="3.4" height="6" fill="#d0d0d0" transform="rotate(135)"/></svg>
<svg style="left:150px;top:330px" width="28" height="28"><use href="#shOpen"/></svg>
<div class="t" style="left:180.5px;top:338.6px;font-size:12px;color:#ff0000;letter-spacing:0.35px;-webkit-text-stroke:0.3px #ff0000">Shutter</div>
<svg style="left:156px;top:372px" width="24" height="24"><use href="#shOpen"/></svg>
<svg style="left:187px;top:370px" width="28" height="28" shape-rendering="crispEdges"><rect width="28" height="28" fill="#000"/><rect x="1.5" y="1.5" width="25" height="25" fill="none" stroke="#fff" stroke-width="1" stroke-dasharray="3 3" stroke-dashoffset="-1"/></svg>
<svg style="left:189px;top:372px" width="24" height="24"><use href="#shClosed"/></svg>
<svg style="left:222px;top:372px" width="24" height="24"><use href="#fx"/></svg>
<svg style="left:255px;top:372px" width="24" height="24"><use href="#fx"/></svg>
<svg style="left:156px;top:407px" width="24" height="24"><use href="#fx"/></svg>
<svg style="left:189px;top:407px" width="24" height="24"><use href="#shStrobe"/></svg>
<svg style="left:221px;top:406px" width="24" height="24"><use href="#flash"/></svg>
<div class="t" style="left:226.3px;top:408.8px;font-size:12px;color:#ff0000;-webkit-text-stroke:0.2px #f00;transform:scaleX(0.85);transform-origin:left">F</div><div class="t" style="left:232.6px;top:408.8px;font-size:12px;color:#ff0000;-webkit-text-stroke:0.2px #f00">l</div><div class="t" style="left:235.5px;top:408.8px;font-size:12px;color:#ff0000;letter-spacing:-0.6px;-webkit-text-stroke:0.2px #f00">...</div>
<svg style="left:150px;top:482px" width="28" height="28"><use href="#zoom"/></svg>
<div class="t" style="left:180.5px;top:490.6px;font-size:12px;color:#ff0000;letter-spacing:0.35px;-webkit-text-stroke:0.3px #ff0000">Zoom</div>
<svg style="left:154px;top:523px" width="28" height="28" shape-rendering="crispEdges"><rect width="28" height="28" fill="#000"/><rect x="1.5" y="1.5" width="25" height="25" fill="none" stroke="#fff" stroke-width="1" stroke-dasharray="3 3" stroke-dashoffset="-1"/></svg>
<svg style="left:156px;top:525px" width="24" height="24"><use href="#zoomN"/></svg>
<div class="t" style="left:164.5px;top:526.5px;width:12px;text-align:center;font-size:12px;color:#ff0000">1</div>
<svg style="left:189px;top:525px" width="24" height="24"><use href="#zoomN"/></svg>
<div class="t" style="left:197.5px;top:526.5px;width:12px;text-align:center;font-size:12px;color:#ff0000">2</div>
<svg style="left:222px;top:525px" width="24" height="24"><use href="#zoomN"/></svg>
<div class="t" style="left:230.5px;top:526.5px;width:12px;text-align:center;font-size:12px;color:#ff0000">3</div>
<svg style="left:255px;top:525px" width="24" height="24"><use href="#zoomN"/></svg>
<div class="t" style="left:263.5px;top:526.5px;width:12px;text-align:center;font-size:12px;color:#ff0000">4</div>
<svg style="left:156px;top:561px" width="24" height="24"><use href="#zoomN"/></svg>
<div class="t" style="left:164.5px;top:562.5px;width:12px;text-align:center;font-size:12px;color:#ff0000">5</div>
<svg style="left:189px;top:561px" width="24" height="24"><use href="#zoomN"/></svg>
<div class="t" style="left:197.5px;top:562.5px;width:12px;text-align:center;font-size:12px;color:#ff0000">6</div>
<svg style="left:222px;top:561px" width="24" height="24"><use href="#zoomN"/></svg>
<div class="t" style="left:230.5px;top:562.5px;width:12px;text-align:center;font-size:12px;color:#ff0000">7</div>
<svg style="left:255px;top:561px" width="24" height="24"><use href="#zoomN"/></svg>
<div class="t" style="left:263.5px;top:562.5px;width:12px;text-align:center;font-size:12px;color:#ff0000">8</div>
<svg style="left:156px;top:596px" width="24" height="24"><use href="#zoom"/></svg>
<svg style="left:152px;top:631.5px" width="30" height="30" viewBox="-15 -15 30 30"><path d="M-8.34 8.34A11.8 11.8 0 1 1 8.34 8.34" fill="none" stroke="#000" stroke-width="7.0"/><circle r="10" fill="#000"/><circle r="9.8" fill="#3c3c3c" stroke="#9a9a9a" stroke-width="1.8"/><rect x="-1.7" y="-11.2" width="3.4" height="6" fill="#d0d0d0" transform="rotate(135)"/></svg>
<svg style="left:294px;top:140px" width="28" height="28"><use href="#cwheel"/></svg>
<div class="t" style="left:324.7px;top:148.6px;font-size:12px;color:#ff0000;letter-spacing:0.35px;-webkit-text-stroke:0.3px #ff0000">Color</div>
<div style="left:300px;top:183px;width:24px;height:24px;background:#ffffff"></div>
<div style="left:333px;top:183px;width:24px;height:24px;background:#00eef0"></div>
<div style="left:366px;top:183px;width:24px;height:24px;background:#e0005a"></div>
<div style="left:399px;top:183px;width:24px;height:24px;background:#009a00"></div>
<svg style="left:364px;top:217px" width="28" height="28" shape-rendering="crispEdges"><rect width="28" height="28" fill="#000"/><rect x="1.5" y="1.5" width="25" height="25" fill="none" stroke="#fff" stroke-width="1" stroke-dasharray="3 3" stroke-dashoffset="-1"/></svg>
<div style="left:300px;top:219px;width:24px;height:24px;background:#ff8000"></div>
<div style="left:333px;top:219px;width:24px;height:24px;background:#e6d800"></div>
<div style="left:366px;top:219px;width:24px;height:24px;background:#2a00aa"></div>
<div style="left:399px;top:219px;width:24px;height:24px;background:#cc00aa"></div>
<svg style="left:300px;top:254px" width="24" height="24"><use href="#crotL"/></svg>
<svg style="left:333px;top:254px" width="24" height="24"><use href="#crotR"/></svg>
<svg style="left:294px;top:330px" width="28" height="28"><use href="#gobo"/></svg>
<div class="t" style="left:324.6px;top:338.6px;font-size:12px;color:#ff0000;letter-spacing:0.35px;-webkit-text-stroke:0.3px #ff0000">Gobo</div>
<svg style="left:406px;top:334px" width="22" height="22" viewBox="0 0 24 24"><rect width="24" height="24" fill="#000"/><circle cx="12" cy="12" r="11.5" fill="#fff"/><path d="M12 12Q14.63 17.39 15.71 23.41A12 12 0 0 1 8.49 23.48Q10.55 17.82 12 12Z" fill="#000"/><path d="M12 12Q6.06 12.84 0.00 12.00A12 12 0 0 1 2.17 5.12Q6.91 8.82 12 12Z" fill="#000"/><path d="M12 12Q15.61 7.21 20.49 3.51A12 12 0 0 1 23.82 9.92Q17.85 10.65 12 12Z" fill="#000"/><circle cx="12" cy="12" r="3.6" fill="#000"/></svg>
<svg style="left:300px;top:373px" width="24" height="24" viewBox="0 0 24 24"><rect width="24" height="24" fill="#000"/><circle cx="12" cy="12" r="12" fill="#fff"/></svg>
<svg style="left:333px;top:373px" width="24" height="24" viewBox="0 0 24 24"><rect width="24" height="24" fill="#000"/><circle cx="12" cy="12" r="11.5" fill="none" stroke="#2a4a4a" stroke-width="0.6"/><rect x="1.5" y="10.8" width="21" height="2.6" fill="#fff"/></svg>
<svg style="left:363px;top:370px" width="30" height="30"><rect x="0.5" y="0.5" width="29" height="29" fill="#000" stroke="#fff" stroke-width="1"/><rect x="2" y="2" width="26" height="26" fill="none" stroke="#e00" stroke-width="1.4" stroke-dasharray="3 2"/></svg>
<svg style="left:366px;top:373px" width="24" height="24" viewBox="0 0 24 24"><rect width="24" height="24" fill="#000"/><circle cx="12" cy="12" r="11.5" fill="#fff"/><path d="M12 12Q14.63 17.39 15.71 23.41A12 12 0 0 1 8.49 23.48Q10.55 17.82 12 12Z" fill="#000"/><path d="M12 12Q6.06 12.84 0.00 12.00A12 12 0 0 1 2.17 5.12Q6.91 8.82 12 12Z" fill="#000"/><path d="M12 12Q15.61 7.21 20.49 3.51A12 12 0 0 1 23.82 9.92Q17.85 10.65 12 12Z" fill="#000"/><circle cx="12" cy="12" r="3.6" fill="#000"/></svg>
<svg style="left:399px;top:373px" width="24" height="24" viewBox="0 0 24 24"><rect width="24" height="24" fill="#000"/><circle cx="12" cy="12" r="11.5" fill="none" stroke="#2a4a4a" stroke-width="0.6"/><circle cx="20.30" cy="12.00" r="2.1" fill="#fff"/><circle cx="18.71" cy="16.88" r="2.1" fill="#fff"/><circle cx="14.56" cy="19.89" r="2.1" fill="#fff"/><circle cx="9.44" cy="19.89" r="2.1" fill="#fff"/><circle cx="5.29" cy="16.88" r="2.1" fill="#fff"/><circle cx="3.70" cy="12.00" r="2.1" fill="#fff"/><circle cx="5.29" cy="7.12" r="2.1" fill="#fff"/><circle cx="9.44" cy="4.11" r="2.1" fill="#fff"/><circle cx="14.56" cy="4.11" r="2.1" fill="#fff"/><circle cx="18.71" cy="7.12" r="2.1" fill="#fff"/></svg>
<svg style="left:300px;top:409px" width="24" height="24" viewBox="0 0 24 24"><rect width="24" height="24" fill="#000"/><circle cx="12" cy="12" r="11.5" fill="#000" stroke="#2a4a4a" stroke-width="0.6"/><path d="M5 6C9 4 15 4 19 6" stroke="#fff" stroke-width="2.5" fill="none"/><path d="M4 19C8 17 14 16 19.5 18" stroke="#fff" stroke-width="3" fill="none"/><path d="M12 5V18" stroke="#fff" stroke-width="2.6"/></svg>
<svg style="left:333px;top:409px" width="24" height="24" viewBox="0 0 24 24"><rect width="24" height="24" fill="#000"/><circle cx="12" cy="12" r="11.5" fill="#1a1a1a"/><rect x="-1.2" y="-10" width="2.4" height="5.5" fill="#fff" transform="translate(12 12) rotate(10)"/><rect x="-1.2" y="-10" width="2.4" height="5.5" fill="#fff" transform="translate(12 12) rotate(70)"/><rect x="-1.2" y="-10" width="2.4" height="5.5" fill="#fff" transform="translate(12 12) rotate(130)"/><rect x="-1.2" y="-10" width="2.4" height="5.5" fill="#fff" transform="translate(12 12) rotate(190)"/><rect x="-1.2" y="-10" width="2.4" height="5.5" fill="#fff" transform="translate(12 12) rotate(250)"/><rect x="-1.2" y="-10" width="2.4" height="5.5" fill="#fff" transform="translate(12 12) rotate(310)"/></svg>
<svg style="left:366px;top:409px" width="24" height="24" viewBox="0 0 24 24"><rect width="24" height="24" fill="#000"/><circle cx="12" cy="12" r="11.5" fill="none" stroke="#2a4a4a" stroke-width="0.6"/><path d="M12 3.5L14.3 9.5H20.5L15.5 13.3L17.4 19.6L12 15.8L6.6 19.6L8.5 13.3L3.5 9.5H9.7Z" fill="none" stroke="#fff" stroke-width="1.3"/></svg>
<svg style="left:399px;top:409px" width="24" height="24" viewBox="0 0 24 24"><rect width="24" height="24" fill="#000"/><circle cx="12" cy="12" r="11.5" fill="none" stroke="#2a4a4a" stroke-width="0.6"/><path d="M7.00 5.20L7.74 6.98L9.66 7.13L8.20 8.39L8.65 10.27L7.00 9.26L5.35 10.27L5.80 8.39L4.34 7.13L6.26 6.98Z" fill="#fff"/><path d="M12.50 3.80L13.08 5.20L14.59 5.32L13.44 6.31L13.79 7.78L12.50 6.99L11.21 7.78L11.56 6.31L10.41 5.32L11.92 5.20Z" fill="#fff"/><path d="M17.00 6.00L17.79 7.91L19.85 8.07L18.28 9.42L18.76 11.43L17.00 10.35L15.24 11.43L15.72 9.42L14.15 8.07L16.21 7.91Z" fill="#fff"/><path d="M6.50 11.60L7.13 13.13L8.78 13.26L7.53 14.33L7.91 15.94L6.50 15.08L5.09 15.94L5.47 14.33L4.22 13.26L5.87 13.13Z" fill="#fff"/><path d="M12.00 9.90L12.69 11.55L14.47 11.70L13.11 12.86L13.53 14.60L12.00 13.67L10.47 14.60L10.89 12.86L9.53 11.70L11.31 11.55Z" fill="#fff"/><path d="M17.50 12.40L18.19 14.05L19.97 14.20L18.61 15.36L19.03 17.10L17.50 16.17L15.97 17.10L16.39 15.36L15.03 14.20L16.81 14.05Z" fill="#fff"/><path d="M9.00 15.90L9.69 17.55L11.47 17.70L10.11 18.86L10.53 20.60L9.00 19.67L7.47 20.60L7.89 18.86L6.53 17.70L8.31 17.55Z" fill="#fff"/><path d="M14.50 16.10L15.13 17.63L16.78 17.76L15.53 18.83L15.91 20.44L14.50 19.58L13.09 20.44L13.47 18.83L12.22 17.76L13.87 17.63Z" fill="#fff"/><path d="M19.00 17.20L19.48 18.34L20.71 18.44L19.77 19.25L20.06 20.46L19.00 19.81L17.94 20.46L18.23 19.25L17.29 18.44L18.52 18.34Z" fill="#fff"/></svg>
<svg style="left:300px;top:444px" width="24" height="24"><use href="#rgL"/></svg>
<svg style="left:333px;top:444px" width="24" height="24"><use href="#rgR"/></svg>
<svg style="left:294px;top:520px" width="28" height="28"><use href="#gobo"/></svg>
<div class="t" style="left:324.7px;top:528.6px;font-size:12px;color:#ff0000;letter-spacing:0.35px;-webkit-text-stroke:0.3px #ff0000">Gobo 2</div>
<svg style="left:300px;top:562px" width="24" height="24" viewBox="0 0 24 24"><rect width="24" height="24" fill="#000"/><circle cx="12" cy="12" r="12" fill="#fff"/></svg>
<svg style="left:331px;top:560px" width="28" height="28" shape-rendering="crispEdges"><rect width="28" height="28" fill="#000"/><rect x="1.5" y="1.5" width="25" height="25" fill="none" stroke="#fff" stroke-width="1" stroke-dasharray="3 3" stroke-dashoffset="-1"/></svg>
<svg style="left:333px;top:562px" width="24" height="24" viewBox="0 0 24 24"><rect width="24" height="24" fill="#000"/><circle cx="12" cy="12" r="11.5" fill="none" stroke="#2a4a4a" stroke-width="0.6"/><circle cx="8" cy="8" r="3.3" fill="#00e8ff"/><circle cx="16" cy="8" r="3.3" fill="#eee"/><circle cx="8" cy="16" r="3.3" fill="#ff00ff"/><circle cx="16" cy="16" r="3.3" fill="#ffee00"/></svg>
<svg style="left:366px;top:562px" width="24" height="24" viewBox="0 0 24 24"><rect width="24" height="24" fill="#000"/><circle cx="12" cy="12" r="11.6" fill="#f5ec00"/><path d="M22.34 15.76Q15.59 19.70 10.91 16.06" fill="none" stroke="#000" stroke-width="4.6" stroke-linecap="round"/><path d="M8.24 22.34Q4.30 15.59 7.94 10.91" fill="none" stroke="#000" stroke-width="4.6" stroke-linecap="round"/><path d="M1.66 8.24Q8.41 4.30 13.09 7.94" fill="none" stroke="#000" stroke-width="4.6" stroke-linecap="round"/><path d="M15.76 1.66Q19.70 8.41 16.06 13.09" fill="none" stroke="#000" stroke-width="4.6" stroke-linecap="round"/><circle cx="12" cy="12" r="2" fill="#f5ec00"/></svg>
<svg style="left:399px;top:562px" width="24" height="24" viewBox="0 0 24 24"><rect width="24" height="24" fill="#000"/><circle cx="12" cy="12" r="11.8" fill="#fff"/><path d="M13.20 12.00L13.26 12.10L13.30 12.22L13.34 12.34L13.37 12.47L13.38 12.60L13.38 12.74L13.36 12.89L13.34 13.04L13.29 13.18L13.23 13.33L13.15 13.48L13.06 13.62L12.95 13.75L12.83 13.88L12.69 14.00L12.54 14.11L12.38 14.21L12.20 14.29L12.01 14.36L11.81 14.42L11.60 14.45L11.39 14.47L11.16 14.47L10.94 14.45L10.71 14.41L10.49 14.35L10.26 14.26L10.04 14.16L9.82 14.03L9.61 13.88L9.42 13.71L9.23 13.52L9.06 13.31L8.90 13.09L8.76 12.84L8.65 12.59L8.55 12.31L8.47 12.03L8.42 11.73L8.39 11.43L8.39 11.12L8.42 10.81L8.48 10.49L8.56 10.18L8.67 9.87L8.81 9.56L8.97 9.27L9.17 8.98L9.39 8.71L9.63 8.46L9.90 8.22L10.20 8.00L10.51 7.81L10.84 7.64L11.20 7.50L11.56 7.39L11.94 7.31L12.34 7.26L12.73 7.24L13.14 7.26L13.54 7.31L13.95 7.40L14.35 7.52L14.74 7.68L15.13 7.87L15.50 8.09L15.85 8.35L16.19 8.65L16.50 8.97L16.79 9.32L17.05 9.70L17.28 10.10L17.48 10.53L17.64 10.97L17.77 11.43L17.85 11.91L17.90 12.39L17.91 12.89L17.88 13.39L17.80 13.89L17.68 14.38L17.52 14.87L17.32 15.35L17.07 15.81L16.79 16.26L16.46 16.68L16.10 17.08L15.70 17.45L15.27 17.79L14.81 18.10L14.32 18.36L13.80 18.59L13.27 18.78L12.71 18.92L12.14 19.02L11.56 19.07L10.97 19.07L10.37 19.02L9.78 18.92L9.20 18.77L8.62 18.57L8.06 18.32L7.52 18.02L6.99 17.68L6.50 17.29L6.03 16.86L5.60 16.38L5.21 15.87L4.86 15.33L4.55 14.75L4.29 14.14L4.08 13.51L3.92 12.86L3.82 12.19L3.77 11.51L3.78 10.83L3.84 10.14L3.96 9.46L4.14 8.78L4.38 8.12L4.68 7.47L5.02 6.85L5.43 6.25L5.88 5.68L6.38 5.15L6.93 4.66L7.52 4.22L8.15 3.82L8.82 3.47L9.51 3.18L10.24 2.95L10.98 2.77L11.74 2.66L12.52 2.61L13.30 2.62L14.08 2.70L14.86 2.84L15.62 3.05L16.38 3.33L17.11 3.67L17.81 4.07L18.49 4.52L19.12 5.04L19.72 5.61L20.27 6.24L20.77 6.91L21.22 7.62L21.60 8.37L21.93 9.16L22.19 9.97L22.38 10.81L22.50 11.67L22.56 12.54L22.54 13.42L22.45 14.29L22.28 15.16L22.04 16.02L21.73 16.86L21.35 17.68L20.90 18.47" fill="none" stroke="#e040e0" stroke-width="2.6"/><circle cx="12" cy="12" r="11.8" fill="none" stroke="#f0d0f0" stroke-width="0.6"/></svg>
<svg style="left:300px;top:596px" width="24" height="24" viewBox="0 0 24 24"><rect width="24" height="24" fill="#000"/><circle cx="12" cy="12" r="11.5" fill="#000"/><path d="M12 9L23.91 10.54L23.91 13.46Z" fill="#8a1aa8"/><path d="M12 9L23.48 15.51L22.29 18.18Z" fill="#8a1aa8"/><path d="M12 9L21.06 19.87L18.88 21.83Z" fill="#8a1aa8"/><path d="M12 9L17.07 22.88L14.29 23.78Z" fill="#8a1aa8"/><path d="M12 9L12.21 24.00L9.30 23.69Z" fill="#8a1aa8"/><path d="M12 9L7.31 23.05L4.78 21.58Z" fill="#8a1aa8"/><path d="M12 9L3.22 20.18L1.50 17.82Z" fill="#8a1aa8"/><path d="M12 9L0.65 15.91L0.05 13.05Z" fill="#8a1aa8"/><path d="M12 9L0.05 10.95L0.65 8.09Z" fill="#8a1aa8"/><path d="M12 9L1.50 6.18L3.22 3.82Z" fill="#8a1aa8"/><path d="M12 9L4.78 2.42L7.31 0.95Z" fill="#8a1aa8"/><path d="M12 9L9.30 0.31L12.21 0.00Z" fill="#8a1aa8"/><path d="M12 9L14.29 0.22L17.07 1.12Z" fill="#8a1aa8"/><path d="M12 9L18.88 2.17L21.06 4.13Z" fill="#8a1aa8"/><path d="M12 9L22.29 5.82L23.48 8.49Z" fill="#8a1aa8"/><circle cx="12" cy="12" r="11.5" fill="none" stroke="#000" stroke-width="1"/><ellipse cx="12" cy="8.5" rx="6" ry="4.5" fill="#000"/></svg>
<svg style="left:333px;top:596px" width="24" height="24" viewBox="0 0 24 24"><rect width="24" height="24" fill="#000"/><circle cx="12" cy="12" r="11.5" fill="#3ec4f2"/><g transform="translate(12 12) rotate(0)"><path d="M0 -2V-9M-2.5 -6.5L0 -9L2.5 -6.5" stroke="#102030" stroke-width="1.1" fill="none"/></g><g transform="translate(12 12) rotate(72)"><path d="M0 -2V-9M-2.5 -6.5L0 -9L2.5 -6.5" stroke="#102030" stroke-width="1.1" fill="none"/></g><g transform="translate(12 12) rotate(144)"><path d="M0 -2V-9M-2.5 -6.5L0 -9L2.5 -6.5" stroke="#102030" stroke-width="1.1" fill="none"/></g><g transform="translate(12 12) rotate(216)"><path d="M0 -2V-9M-2.5 -6.5L0 -9L2.5 -6.5" stroke="#102030" stroke-width="1.1" fill="none"/></g><g transform="translate(12 12) rotate(288)"><path d="M0 -2V-9M-2.5 -6.5L0 -9L2.5 -6.5" stroke="#102030" stroke-width="1.1" fill="none"/></g><circle cx="12" cy="12" r="10" fill="none" stroke="#102030" stroke-width="0.8" stroke-dasharray="1.5 2"/></svg>
<svg style="left:366px;top:596px" width="24" height="24" viewBox="0 0 24 24"><rect width="24" height="24" fill="#000"/><circle cx="12" cy="12" r="12" fill="#8c8cf2"/><circle cx="12" cy="12" r="8" fill="#b0a8f8"/><path d="M13.00 12.00L13.05 12.08L13.09 12.17L13.13 12.27L13.16 12.38L13.17 12.49L13.18 12.60L13.18 12.72L13.16 12.84L13.13 12.97L13.09 13.09L13.04 13.21L12.97 13.33L12.89 13.45L12.80 13.57L12.69 13.67L12.58 13.78L12.45 13.87L12.31 13.95L12.16 14.02L12.00 14.08L11.83 14.13L11.66 14.16L11.48 14.18L11.29 14.19L11.10 14.17L10.91 14.15L10.71 14.10L10.52 14.04L10.33 13.95L10.14 13.86L9.96 13.74L9.79 13.61L9.62 13.46L9.47 13.29L9.32 13.11L9.19 12.91L9.08 12.70L8.98 12.48L8.90 12.24L8.83 12.00L8.79 11.75L8.77 11.49L8.76 11.22L8.78 10.95L8.82 10.68L8.89 10.41L8.98 10.15L9.09 9.88L9.22 9.63L9.38 9.38L9.56 9.14L9.76 8.91L9.98 8.70L10.22 8.50L10.48 8.32L10.75 8.16L11.05 8.03L11.35 7.91L11.67 7.82L12.00 7.75L12.34 7.71L12.68 7.70L13.03 7.71L13.38 7.75L13.73 7.82L14.08 7.92L14.42 8.05L14.75 8.21L15.08 8.40L15.39 8.61L15.68 8.85L15.96 9.12L16.22 9.41L16.46 9.73L16.68 10.06L16.87 10.42L17.03 10.79L17.16 11.18L17.26 11.59L17.33 12.00L17.37 12.42L17.37 12.85L17.34 13.28L17.28 13.72L17.18 14.14L17.04 14.57L16.87 14.98L16.67 15.39L16.43 15.78L16.15 16.15L15.85 16.51L15.52 16.84L15.15 17.15L14.77 17.43L14.35 17.68L13.92 17.90L13.46 18.08L12.99 18.23L12.50 18.34L12.00 18.42L11.49 18.45L10.98 18.44L10.46 18.40L9.95 18.31L9.44 18.18L8.94 18.01L8.45 17.79L7.97 17.54L7.52 17.25L7.08 16.92L6.67 16.55L6.28 16.15L5.93 15.72L5.61 15.26L5.32 14.77L5.07 14.25L4.87 13.71L4.70 13.16L4.58 12.58L4.50 12.00" fill="none" stroke="#ee50ee" stroke-width="1.8"/></svg>
<svg style="left:399px;top:596px" width="24" height="24" viewBox="0 0 24 24"><rect width="24" height="24" fill="#000"/><circle cx="12" cy="12" r="12" fill="#3a1a80"/><path d="M12 12L23.46 11.00L23.46 13.00Z" fill="#fff"/><path d="M12 12L23.00 15.36L22.25 17.22Z" fill="#fff"/><path d="M12 12L20.94 19.24L19.54 20.68Z" fill="#fff"/><path d="M12 12L17.58 22.06L15.74 22.87Z" fill="#fff"/><path d="M12 12L13.40 23.41L11.40 23.48Z" fill="#fff"/><path d="M12 12L9.02 23.11L7.14 22.42Z" fill="#fff"/><path d="M12 12L5.08 21.18L3.59 19.84Z" fill="#fff"/><path d="M12 12L2.14 17.92L1.26 16.12Z" fill="#fff"/><path d="M12 12L0.64 13.80L0.50 11.80Z" fill="#fff"/><path d="M12 12L0.79 9.41L1.41 7.51Z" fill="#fff"/><path d="M12 12L2.58 5.40L3.87 3.87Z" fill="#fff"/><path d="M12 12L5.74 2.36L7.51 1.41Z" fill="#fff"/><path d="M12 12L9.81 0.71L11.80 0.50Z" fill="#fff"/><path d="M12 12L14.19 0.71L16.12 1.26Z" fill="#fff"/><path d="M12 12L18.26 2.36L19.84 3.59Z" fill="#fff"/><path d="M12 12L21.42 5.40L22.42 7.14Z" fill="#fff"/><path d="M12 12L23.21 9.41L23.48 11.40Z" fill="#fff"/><circle cx="12" cy="12" r="2" fill="#3a1a80"/></svg>
<svg style="left:300px;top:630px" width="24" height="24" viewBox="0 0 24 24"><rect width="24" height="24" fill="#000"/><circle cx="12" cy="12" r="11.3" fill="#f0e010" stroke="#e8e8e8" stroke-width="1"/><path d="M4 17Q8 9 11 3M7 21Q12 12 16 4M12 21Q16 14 20 8M3.5 11Q6 7 8 4M16 20Q19 16 21.5 13" stroke="#18b818" stroke-width="2" fill="none"/></svg>
<svg style="left:294px;top:672px" width="28" height="28"><use href="#rgL"/></svg>
<div class="t" style="left:325px;top:680.6px;font-size:12px;color:#ff0000;letter-spacing:0.35px;-webkit-text-stroke:0.3px #ff0000">RotGobo</div>
<svg style="left:298px;top:711px" width="28" height="28" shape-rendering="crispEdges"><rect width="28" height="28" fill="#000"/><rect x="1.5" y="1.5" width="25" height="25" fill="none" stroke="#fff" stroke-width="1" stroke-dasharray="3 3" stroke-dashoffset="-1"/></svg>
<svg style="left:300px;top:713px" width="24" height="24"><use href="#rgHash"/></svg>
<svg style="left:333px;top:713px" width="24" height="24"><use href="#rgL"/></svg>
<svg style="left:366px;top:713px" width="24" height="24"><use href="#rgR"/></svg>
<svg style="left:296px;top:745.5px" width="30" height="30" viewBox="-15 -15 30 30"><path d="M-8.34 8.34A11.8 11.8 0 1 1 8.34 8.34" fill="none" stroke="#000" stroke-width="7.0"/><circle r="10" fill="#000"/><circle r="9.8" fill="#3c3c3c" stroke="#9a9a9a" stroke-width="1.8"/><rect x="-1.7" y="-11.2" width="3.4" height="6" fill="#d0d0d0" transform="rotate(135)"/></svg>
<div style="left:440px;top:115px;width:429px;height:19px;background:#333;border-top:1px solid #3a3a3a"></div>
<div style="left:440px;top:134px;width:429px;height:367px;border:1px solid #333;border-top:none"></div>
<div style="left:440px;top:505px;width:429px;height:19px;background:#333;border-top:1px solid #3a3a3a"></div>
<div style="left:440px;top:524px;width:429px;height:276px;border:1px solid #333;border-top:none;border-bottom:none"></div>
<div class="t" style="left:440px;top:120px;font-size:10.5px;color:#9a9a9a;text-align:center;width:430px;letter-spacing:0.35px">Color mixing</div>
<div style="left:454px;top:147px;width:268px;height:268px;border-radius:50%;background:conic-gradient(hsl(75.0,100%,50%) 0deg,hsl(73.1,100%,50%) 5deg,hsl(71.2,100%,50%) 10deg,hsl(69.3,100%,50%) 15deg,hsl(67.4,100%,50%) 20deg,hsl(65.6,100%,50%) 25deg,hsl(63.7,100%,50%) 30deg,hsl(61.8,100%,50%) 35deg,hsl(59.9,100%,50%) 40deg,hsl(58.0,100%,50%) 45deg,hsl(52.7,100%,50%) 50deg,hsl(47.3,100%,50%) 55deg,hsl(42.0,100%,51%) 60deg,hsl(36.7,100%,51%) 65deg,hsl(31.3,100%,51%) 70deg,hsl(26.0,100%,51%) 75deg,hsl(20.7,100%,52%) 80deg,hsl(15.3,100%,52%) 85deg,hsl(10.0,100%,52%) 90deg,hsl(5.0,100%,52%) 95deg,hsl(0.0,100%,52%) 100deg,hsl(355.0,100%,52%) 105deg,hsl(350.0,100%,52%) 110deg,hsl(345.0,100%,52%) 115deg,hsl(340.0,100%,52%) 120deg,hsl(335.0,100%,52%) 125deg,hsl(330.0,100%,52%) 130deg,hsl(325.0,100%,52%) 135deg,hsl(317.3,100%,51%) 140deg,hsl(309.6,100%,50%) 145deg,hsl(302.5,100%,50%) 150deg,hsl(296.2,100%,50%) 155deg,hsl(290.0,100%,51%) 160deg,hsl(283.8,100%,51%) 165deg,hsl(277.5,100%,51%) 170deg,hsl(271.2,100%,52%) 175deg,hsl(265.0,100%,52%) 180deg,hsl(260.8,100%,53%) 185deg,hsl(256.5,100%,54%) 190deg,hsl(252.2,100%,54%) 195deg,hsl(248.0,100%,55%) 200deg,hsl(242.4,100%,55%) 205deg,hsl(236.8,100%,55%) 210deg,hsl(231.2,100%,55%) 215deg,hsl(225.6,100%,55%) 220deg,hsl(220.0,100%,55%) 225deg,hsl(216.0,100%,55%) 230deg,hsl(212.0,100%,55%) 235deg,hsl(208.0,100%,55%) 240deg,hsl(204.0,100%,55%) 245deg,hsl(200.0,100%,55%) 250deg,hsl(195.0,92%,54%) 255deg,hsl(190.0,85%,52%) 260deg,hsl(185.0,78%,51%) 265deg,hsl(180.0,70%,50%) 270deg,hsl(172.5,69%,51%) 275deg,hsl(165.0,67%,52%) 280deg,hsl(157.5,66%,53%) 285deg,hsl(150.0,65%,54%) 290deg,hsl(142.5,63%,55%) 295deg,hsl(135.0,62%,56%) 300deg,hsl(128.3,67%,55%) 305deg,hsl(121.7,71%,54%) 310deg,hsl(115.0,76%,53%) 315deg,hsl(108.3,81%,52%) 320deg,hsl(101.7,85%,51%) 325deg,hsl(95.0,90%,50%) 330deg,hsl(91.7,92%,50%) 335deg,hsl(88.3,93%,50%) 340deg,hsl(85.0,95%,50%) 345deg,hsl(81.7,97%,50%) 350deg,hsl(78.3,98%,50%) 355deg,hsl(75.0,100%,50%) 360deg)"></div>
<div style="left:454px;top:147px;width:268px;height:268px;border-radius:50%;background:radial-gradient(circle closest-side,#fff 0%,rgba(255,255,255,0.88) 20%,rgba(255,255,255,0.6) 45%,rgba(255,255,255,0.28) 72%,rgba(255,255,255,0) 100%)"></div>
<svg style="left:643px;top:357px" width="16" height="16"><circle cx="8" cy="8" r="4" fill="none" stroke="#000" stroke-width="1.3"/><path d="M2 2L14 14M14 2L2 14" stroke="#000" stroke-width="1"/></svg>
<div class="t" style="left:745px;top:141px;width:23px;text-align:center;font-size:9.5px;color:#fff">RGB</div>
<div style="left:745px;top:150px;width:23px;height:6px;border:2px solid #fff;border-bottom:none"></div>
<div style="left:745px;top:155px;width:23px;height:222px;border:1px solid #8a8a8a;background:linear-gradient(#ff33ee 0%,#b42aa8 30%,#5c1658 58%,#240a22 82%,#0c000a 100%)"></div>
<div style="left:746px;top:157px;width:21px;height:2px;background:#00c020"></div>
<div class="t" style="left:715px;top:372px;font-size:10px;color:#fff;-webkit-text-stroke:0.2px #fff">R: 255</div>
<div class="t" style="left:715px;top:386px;font-size:10px;color:#fff;-webkit-text-stroke:0.2px #fff">G: &nbsp;55</div>
<div class="t" style="left:715px;top:400px;font-size:10px;color:#fff;-webkit-text-stroke:0.2px #fff">B: 231</div>
<div style="left:745px;top:392px;width:23px;height:17px;border:1px solid #8a8a8a;background:#ff37e7"></div>
<div style="left:443px;top:422px;width:143px;height:75px;background:#1c1c1c"></div>
<svg style="left:447px;top:426px" width="28" height="28"><use href="#cmix"/></svg>
<div class="t" style="left:477.5px;top:434.6px;font-size:12px;color:#ff0000;letter-spacing:0.4px;-webkit-text-stroke:0.3px #f00">Color mixing</div>
<svg style="left:451px;top:464px" width="28" height="28" shape-rendering="crispEdges"><rect width="28" height="28" fill="#000"/><rect x="1.5" y="1.5" width="25" height="25" fill="none" stroke="#fff" stroke-width="1" stroke-dasharray="3 3" stroke-dashoffset="-1"/></svg>
<div style="left:453px;top:466px;width:24px;height:24px;background:#ff37e7"></div>
<div class="t" style="left:453px;top:467.5px;width:24px;text-align:center;font-size:12px;color:#f0104a;-webkit-text-stroke:0.2px #f0104a">all</div>
<div class="t" style="left:440px;top:510px;font-size:10.5px;color:#9a9a9a;text-align:center;width:430px;letter-spacing:0.35px">X-Y</div>
<svg style="left:449px;top:532px" width="262" height="262"><g stroke="#323232" stroke-width="1" fill="none"><path d="M0.5 0V260M0 0.5H260"/><path d="M10.5 0V260M0 10.5H260"/><path d="M20.5 0V260M0 20.5H260"/><path d="M30.5 0V260M0 30.5H260"/><path d="M40.5 0V260M0 40.5H260"/><path d="M50.5 0V260M0 50.5H260"/><path d="M60.5 0V260M0 60.5H260"/><path d="M70.5 0V260M0 70.5H260"/><path d="M80.5 0V260M0 80.5H260"/><path d="M90.5 0V260M0 90.5H260"/><path d="M100.5 0V260M0 100.5H260"/><path d="M110.5 0V260M0 110.5H260"/><path d="M120.5 0V260M0 120.5H260"/><path d="M130.5 0V260M0 130.5H260"/><path d="M140.5 0V260M0 140.5H260"/><path d="M150.5 0V260M0 150.5H260"/><path d="M160.5 0V260M0 160.5H260"/><path d="M170.5 0V260M0 170.5H260"/><path d="M180.5 0V260M0 180.5H260"/><path d="M190.5 0V260M0 190.5H260"/><path d="M200.5 0V260M0 200.5H260"/><path d="M210.5 0V260M0 210.5H260"/><path d="M220.5 0V260M0 220.5H260"/><path d="M230.5 0V260M0 230.5H260"/><path d="M240.5 0V260M0 240.5H260"/><path d="M250.5 0V260M0 250.5H260"/><path d="M260.5 0V260M0 260.5H260"/></g></svg>
<svg style="left:615px;top:725px" width="100" height="72" viewBox="0 0 100 72"><defs><filter id="kb" x="-30%" y="-30%" width="160%" height="160%"><feGaussianBlur stdDeviation="2.6"/></filter></defs>
<g filter="url(#kb)" fill="#525252"><rect x="33" y="7" width="34" height="34" rx="7"/><rect x="8" y="29" width="84" height="36" rx="7"/></g>
<g fill="#484848"><rect x="36" y="10" width="28" height="28" rx="3"/><rect x="11" y="32" width="78" height="30" rx="3"/></g>
<g fill="#2e2e2e"><rect x="40.5" y="13" width="18.5" height="19.5"/><rect x="17" y="37" width="19" height="19"/><rect x="39.5" y="37" width="22.5" height="19"/><rect x="64" y="37" width="20.5" height="19"/></g>
<g fill="#3b3b3b"><rect x="41" y="13" width="17.5" height="16"/><rect x="17.5" y="37" width="18" height="15.5"/><rect x="40" y="37" width="21.5" height="15.5"/><rect x="64.5" y="37" width="19.5" height="15.5"/></g>
<g stroke="#0a0a0a" stroke-width="1" fill="none"><path d="M46 18.5V23.5M46 40.5V46.5M21 44H26M67.5 44H74"/></g><g fill="#0a0a0a"><path d="M20 44L22.5 42.3V45.7Z M74.5 44L72 42.3V45.7Z"/></g></svg>
<svg style="left:615px;top:725px" width="100" height="72"><g stroke="#323232" stroke-width="1" opacity="0.85"><path d="M4.5 0V68"/><path d="M14.5 0V68"/><path d="M24.5 0V68"/><path d="M34.5 0V68"/><path d="M44.5 0V68"/><path d="M54.5 0V68"/><path d="M64.5 0V68"/><path d="M74.5 0V68"/><path d="M84.5 0V68"/><path d="M94.5 0V68"/><path d="M0 7.5H95"/><path d="M0 17.5H95"/><path d="M0 27.5H95"/><path d="M0 37.5H95"/><path d="M0 47.5H95"/><path d="M0 57.5H95"/><path d="M0 67.5H95"/></g></svg>
<div style="left:579px;top:532px;width:1px;height:260px;background:#fff"></div>
<div style="left:449px;top:663px;width:260px;height:1px;background:#fff"></div>
<svg style="left:571px;top:655px" width="17" height="17"><g stroke="#fff" stroke-width="0.9"><path d="M2.2 2.2L5.6 5.6M14.8 2.2L11.4 5.6M2.2 14.8L5.6 11.4M14.8 14.8L11.4 11.4"/></g><g fill="#fff"><circle cx="6" cy="6" r="1.3"/><circle cx="11" cy="6" r="1.3"/><circle cx="6" cy="11" r="1.3"/><circle cx="11" cy="11" r="1.3"/></g><circle cx="8.5" cy="8.5" r="1.6" fill="none" stroke="#ddd" stroke-width="0.8"/></svg>
<div class="t" style="left:450px;top:537px;font-size:10px;color:#fff;letter-spacing:0.3px;-webkit-text-stroke:0.2px #fff">Pan 127-255</div>
<div class="t" style="left:450px;top:557px;font-size:10px;color:#fff;letter-spacing:0.3px;-webkit-text-stroke:0.2px #fff">Tilt 127-255</div>
<div style="left:716px;top:526px;width:143px;height:151px;background:#1c1c1c"></div>
<svg style="left:720px;top:530px" width="28" height="28" viewBox="0 0 28 28"><rect width="28" height="28" rx="4" fill="#9a9a9a"/><g fill="#444"><path d="M14 3L17 7H11Z M14 25L11 21H17Z M3 14L7 11V17Z M25 14L21 17V11Z"/></g><rect x="9.5" y="9.5" width="9" height="9" fill="#777"/><circle cx="14" cy="14" r="2.6" fill="#fff"/></svg>
<div class="t" style="left:750px;top:539px;font-size:12px;color:#ff0000;-webkit-text-stroke:0.3px #f00">X-Y</div>
<svg style="left:724px;top:570px" width="28" height="28" shape-rendering="crispEdges"><rect width="28" height="28" fill="#000"/><rect x="1.5" y="1.5" width="25" height="25" fill="none" stroke="#fff" stroke-width="1" stroke-dasharray="3 3" stroke-dashoffset="-1"/></svg>
<svg style="left:726px;top:572px" width="24" height="24"><use href="#xyMain"/></svg>
<svg style="left:759px;top:572px" width="24" height="24"><use href="#xyN"/></svg>
<div class="t" style="left:774.5px;top:574px;font-size:9px;color:#fff;letter-spacing:0">1</div>
<svg style="left:792px;top:572px" width="24" height="24"><use href="#xyN"/></svg>
<div class="t" style="left:807.5px;top:574px;font-size:9px;color:#fff;letter-spacing:0">2</div>
<svg style="left:825px;top:572px" width="24" height="24"><use href="#xyN"/></svg>
<div class="t" style="left:840.5px;top:574px;font-size:9px;color:#fff;letter-spacing:0">3</div>
<svg style="left:726px;top:606px" width="24" height="24"><use href="#xyN"/></svg>
<div class="t" style="left:741.5px;top:608px;font-size:9px;color:#fff;letter-spacing:0">4</div>
<svg style="left:759px;top:606px" width="24" height="24"><use href="#xyN"/></svg>
<div class="t" style="left:774.5px;top:608px;font-size:9px;color:#fff;letter-spacing:0">5</div>
<svg style="left:792px;top:606px" width="24" height="24"><use href="#xyN"/></svg>
<div class="t" style="left:807.5px;top:608px;font-size:9px;color:#fff;letter-spacing:0">6</div>
<svg style="left:825px;top:606px" width="24" height="24"><use href="#xyN"/></svg>
<div class="t" style="left:840.5px;top:608px;font-size:9px;color:#fff;letter-spacing:0">7</div>
<svg style="left:726px;top:640px" width="24" height="24"><use href="#xyN"/></svg>
<div class="t" style="left:741.5px;top:642px;font-size:9px;color:#fff;letter-spacing:0">8</div>
<div style="left:0px;top:786px;width:436px;height:1px;background:#333"></div>
<div style="left:0px;top:787px;width:436px;height:13px;background:#1e1e1e"></div>
<div style="left:15px;top:789px;width:302px;height:11px;background:linear-gradient(#555,#484848);border-radius:3px 3px 0 0"></div>
<svg style="left:3px;top:791px" width="5" height="8"><path d="M4.5 0.5V7.5L0.5 4Z" fill="#e8e8e8"/></svg>
<svg style="left:427px;top:791px" width="5" height="8"><path d="M0.5 0.5V7.5L4.5 4Z" fill="#e8e8e8"/></svg>
</body></html>
